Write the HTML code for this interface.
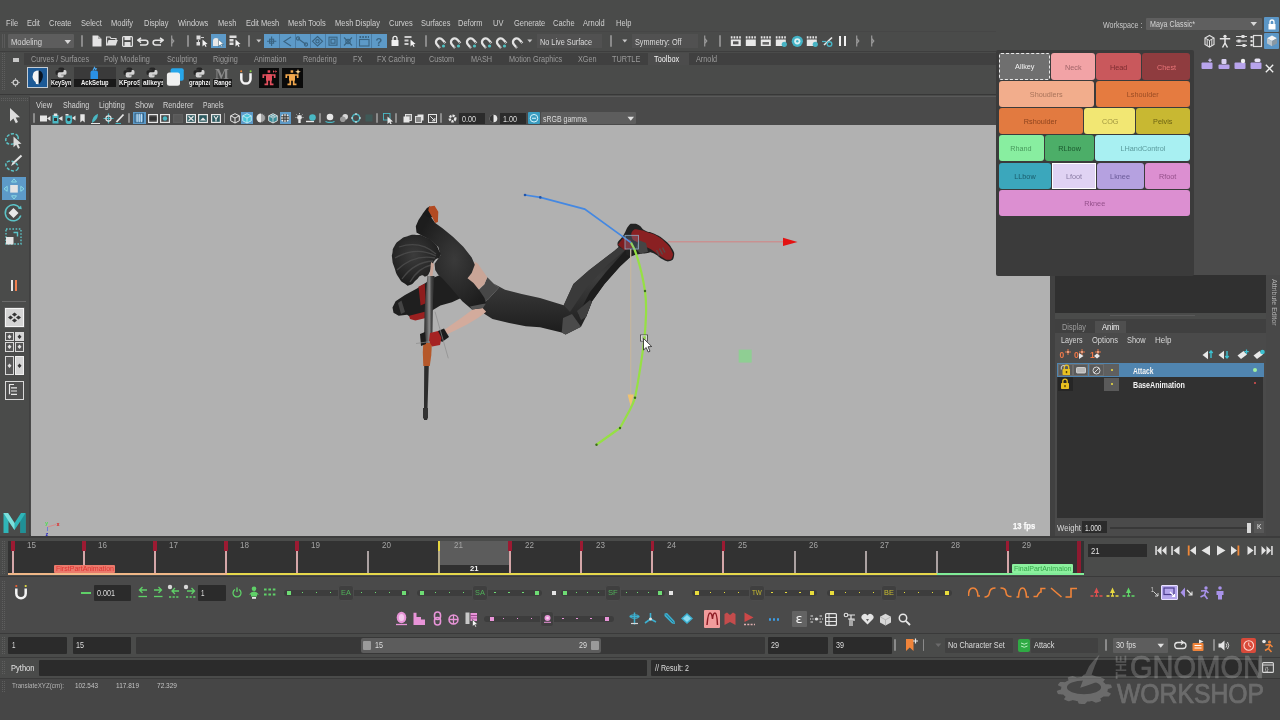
<!DOCTYPE html>
<html><head><meta charset="utf-8"><title>Maya</title>
<style>
html,body{margin:0;padding:0}
body{width:1280px;height:720px;overflow:hidden;background:#4a4b4a;position:relative;font-family:"Liberation Sans",sans-serif;}
body div,body svg{position:absolute;box-sizing:border-box}
.t{white-space:nowrap;transform-origin:0 50%}
.b{font-weight:bold}
</style></head><body><div id="root" style="left:0;top:0;width:1280px;height:720px;will-change:transform">
<div class="t" style="left:6px;top:16.6px;height:12px;line-height:12px;font-size:8.8px;color:#d0d0d0;transform:scaleX(0.850);">File</div>
<div class="t" style="left:27px;top:16.6px;height:12px;line-height:12px;font-size:8.8px;color:#d0d0d0;transform:scaleX(0.850);">Edit</div>
<div class="t" style="left:49px;top:16.6px;height:12px;line-height:12px;font-size:8.8px;color:#d0d0d0;transform:scaleX(0.850);">Create</div>
<div class="t" style="left:81px;top:16.6px;height:12px;line-height:12px;font-size:8.8px;color:#d0d0d0;transform:scaleX(0.850);">Select</div>
<div class="t" style="left:111px;top:16.6px;height:12px;line-height:12px;font-size:8.8px;color:#d0d0d0;transform:scaleX(0.850);">Modify</div>
<div class="t" style="left:144px;top:16.6px;height:12px;line-height:12px;font-size:8.8px;color:#d0d0d0;transform:scaleX(0.850);">Display</div>
<div class="t" style="left:177.5px;top:16.6px;height:12px;line-height:12px;font-size:8.8px;color:#d0d0d0;transform:scaleX(0.850);">Windows</div>
<div class="t" style="left:217.5px;top:16.6px;height:12px;line-height:12px;font-size:8.8px;color:#d0d0d0;transform:scaleX(0.850);">Mesh</div>
<div class="t" style="left:245.5px;top:16.6px;height:12px;line-height:12px;font-size:8.8px;color:#d0d0d0;transform:scaleX(0.850);">Edit Mesh</div>
<div class="t" style="left:288px;top:16.6px;height:12px;line-height:12px;font-size:8.8px;color:#d0d0d0;transform:scaleX(0.850);">Mesh Tools</div>
<div class="t" style="left:335px;top:16.6px;height:12px;line-height:12px;font-size:8.8px;color:#d0d0d0;transform:scaleX(0.850);">Mesh Display</div>
<div class="t" style="left:388.5px;top:16.6px;height:12px;line-height:12px;font-size:8.8px;color:#d0d0d0;transform:scaleX(0.850);">Curves</div>
<div class="t" style="left:420.5px;top:16.6px;height:12px;line-height:12px;font-size:8.8px;color:#d0d0d0;transform:scaleX(0.850);">Surfaces</div>
<div class="t" style="left:458px;top:16.6px;height:12px;line-height:12px;font-size:8.8px;color:#d0d0d0;transform:scaleX(0.850);">Deform</div>
<div class="t" style="left:493px;top:16.6px;height:12px;line-height:12px;font-size:8.8px;color:#d0d0d0;transform:scaleX(0.850);">UV</div>
<div class="t" style="left:513.5px;top:16.6px;height:12px;line-height:12px;font-size:8.8px;color:#d0d0d0;transform:scaleX(0.850);">Generate</div>
<div class="t" style="left:553px;top:16.6px;height:12px;line-height:12px;font-size:8.8px;color:#d0d0d0;transform:scaleX(0.850);">Cache</div>
<div class="t" style="left:583px;top:16.6px;height:12px;line-height:12px;font-size:8.8px;color:#d0d0d0;transform:scaleX(0.850);">Arnold</div>
<div class="t" style="left:615.5px;top:16.6px;height:12px;line-height:12px;font-size:8.8px;color:#d0d0d0;transform:scaleX(0.850);">Help</div>
<div class="t" style="left:1102.5px;top:18.6px;height:12px;line-height:12px;font-size:8.4px;color:#c8c8c8;transform:scaleX(0.850);">Workspace :</div>
<div style="left:1146px;top:17.8px;width:116px;height:12.2px;background:#5f5f5f;border-radius:1px"></div>
<div class="t" style="left:1150px;top:18.4px;height:12px;line-height:12px;font-size:8.4px;color:#d4d4d4;transform:scaleX(0.850);">Maya Classic*</div>
<svg style="left:1250px;top:21px;" width="8" height="6" viewBox="0 0 8 6"><path d="M0.5 1 L7 1 L3.75 5Z" fill="#d8d8d8"/></svg>
<div style="left:1263.5px;top:17px;width:15.5px;height:14.5px;background:#5b96c6;border-radius:1px"></div>
<svg style="left:1263.5px;top:17px;" width="16" height="15" viewBox="0 0 16 15"><rect x="4.5" y="7" width="7" height="5.5" fill="#fff"/><path d="M6 7 V5 a2 2 0 0 1 4 0 V7" fill="none" stroke="#fff" stroke-width="1.3"/></svg>
<div style="left:0px;top:30.8px;width:996px;height:0.8px;background:#464646;"></div>
<div style="left:2px;top:34px;width:1px;height:14px;background:#5a5a5a;"></div>
<div style="left:4px;top:34px;width:1px;height:14px;background:#5a5a5a;"></div>
<div style="left:8px;top:34px;width:66px;height:14px;background:#5d5d5d;border-radius:1px"></div>
<div class="t" style="left:10.5px;top:35.5px;height:12px;line-height:12px;font-size:9px;color:#d6d6d6;transform:scaleX(0.850);">Modeling</div>
<svg style="left:64px;top:38.5px;" width="8" height="6" viewBox="0 0 8 6"><path d="M0.5 1 L7 1 L3.75 5Z" fill="#d8d8d8"/></svg>
<div style="left:81px;top:35px;width:1.5px;height:12px;background:#8a8a8a;border-radius:1px"></div>
<div style="left:187px;top:35px;width:1.5px;height:12px;background:#8a8a8a;border-radius:1px"></div>
<div style="left:248px;top:35px;width:1.5px;height:12px;background:#8a8a8a;border-radius:1px"></div>
<div style="left:425px;top:35px;width:1.5px;height:12px;background:#8a8a8a;border-radius:1px"></div>
<div style="left:610px;top:35px;width:1.5px;height:12px;background:#8a8a8a;border-radius:1px"></div>
<div style="left:719px;top:35px;width:1.5px;height:12px;background:#8a8a8a;border-radius:1px"></div>
<svg style="left:171px;top:35px;" width="4" height="12" viewBox="0 0 4 12"><path d="M0.7 0.5 L0.7 11.5 M0.7 3.5 L2.8 6 L0.7 8.5" fill="none" stroke="#999" stroke-width="1.2"/></svg>
<svg style="left:704px;top:35px;" width="4" height="12" viewBox="0 0 4 12"><path d="M0.7 0.5 L0.7 11.5 M0.7 3.5 L2.8 6 L0.7 8.5" fill="none" stroke="#999" stroke-width="1.2"/></svg>
<svg style="left:855.5px;top:35px;" width="4" height="12" viewBox="0 0 4 12"><path d="M0.7 0.5 L0.7 11.5 M0.7 3.5 L2.8 6 L0.7 8.5" fill="none" stroke="#999" stroke-width="1.2"/></svg>
<svg style="left:870.5px;top:35px;" width="4" height="12" viewBox="0 0 4 12"><path d="M0.7 0.5 L0.7 11.5 M0.7 3.5 L2.8 6 L0.7 8.5" fill="none" stroke="#999" stroke-width="1.2"/></svg>
<svg style="left:92px;top:35px;" width="10" height="12" viewBox="0 0 10 12"><path d="M0.5 0.5 H6 L9.5 4 V11.5 H0.5Z" fill="#e4e4e4"/><path d="M6 0.5 V4 H9.5" fill="#aaa"/></svg>
<svg style="left:106px;top:36px;" width="12" height="10" viewBox="0 0 12 10"><path d="M0.5 9.5 V1 H4 L5 2.5 H10 V4" fill="none" stroke="#ddd" stroke-width="1.2"/><path d="M0.5 9.5 L2.5 4 H11.8 L9.8 9.5Z" fill="#e0e0e0"/></svg>
<svg style="left:122px;top:35.5px;" width="11" height="11" viewBox="0 0 11 11"><rect x="0.6" y="0.6" width="9.8" height="9.8" rx="1" fill="none" stroke="#e0e0e0" stroke-width="1.2"/><rect x="2.5" y="0.6" width="6" height="3.5" fill="#e0e0e0"/><rect x="2.5" y="6" width="6" height="4" fill="#e0e0e0"/></svg>
<svg style="left:137px;top:37px;" width="12" height="9" viewBox="0 0 12 9"><path d="M4 0.8 L0.8 3.2 L4 5.6 M1 3.2 H8.5 a2.3 2.3 0 0 1 0 4.8 H3" fill="none" stroke="#e4e4e4" stroke-width="1.5"/></svg>
<svg style="left:152px;top:37px;" width="12" height="9" viewBox="0 0 12 9"><path d="M8 0.8 L11.2 3.2 L8 5.6 M11 3.2 H3.5 a2.3 2.3 0 0 0 0 4.8 H9" fill="none" stroke="#e4e4e4" stroke-width="1.5"/></svg>
<svg style="left:196px;top:35px;" width="12" height="12" viewBox="0 0 12 12"><rect x="0.5" y="0.5" width="4" height="4" fill="#ddd"/><rect x="0.5" y="7" width="3.5" height="3.5" fill="#ddd"/><path d="M5 2.5 H8 M2.5 5 V7" stroke="#ccc" stroke-width="1"/><path d="M6.5 4.5 L6.5 11.5 L8.3 9.8 L9.6 12 L10.6 11.4 L9.4 9.3 L11.6 9.1Z" fill="#f2f2f2"/></svg>
<div style="left:211px;top:33.5px;width:14.5px;height:14.5px;background:#5d9ac8;"></div>
<svg style="left:212px;top:35px;" width="12" height="12" viewBox="0 0 12 12"><path d="M1 11 V6 a3 3 0 0 1 6 0 V11Z" fill="#e8e8e8"/><path d="M6.5 4.5 L6.5 11.5 L8.3 9.8 L9.6 12 L10.6 11.4 L9.4 9.3 L11.6 9.1Z" fill="#fff" stroke="#356" stroke-width="0.5"/></svg>
<svg style="left:229px;top:35px;" width="12" height="12" viewBox="0 0 12 12"><rect x="0.5" y="0.5" width="7" height="2.5" fill="#ddd"/><rect x="0.5" y="4" width="4" height="2.5" fill="#ddd"/><rect x="0.5" y="7.5" width="4" height="2.5" fill="#ddd"/><path d="M6.5 4.5 L6.5 11.5 L8.3 9.8 L9.6 12 L10.6 11.4 L9.4 9.3 L11.6 9.1Z" fill="#f2f2f2"/></svg>
<svg style="left:256px;top:39px;" width="6" height="4" viewBox="0 0 6 4"><path d="M0.3 0.5 L5.3 0.5 L2.8 3.5Z" fill="#c8c8c8"/></svg>
<div style="left:264.3px;top:33.5px;width:122.5px;height:14.5px;background:#5d9ac8;"></div>
<div style="left:279.20000000000005px;top:33.5px;width:0.8px;height:14.5px;background:#4a7da6;"></div>
<div style="left:294.50000000000006px;top:33.5px;width:0.8px;height:14.5px;background:#4a7da6;"></div>
<div style="left:309.80000000000007px;top:33.5px;width:0.8px;height:14.5px;background:#4a7da6;"></div>
<div style="left:325.1px;top:33.5px;width:0.8px;height:14.5px;background:#4a7da6;"></div>
<div style="left:340.40000000000003px;top:33.5px;width:0.8px;height:14.5px;background:#4a7da6;"></div>
<div style="left:355.70000000000005px;top:33.5px;width:0.8px;height:14.5px;background:#4a7da6;"></div>
<div style="left:371.00000000000006px;top:33.5px;width:0.8px;height:14.5px;background:#4a7da6;"></div>
<svg style="left:264.3px;top:33.5px;" width="123" height="15" viewBox="0 0 123 15"><g fill="none" stroke="#3a6482" stroke-width="1.1"><path d="M7.6 2.5 V12 M3 7.2 H12.3"/><rect x="5.6" y="5.2" width="4" height="4"/><path d="M27 3 L20 7.5 L27 12"/><path d="M34 4.5 L42 10.5"/><circle cx="34" cy="4.5" r="1.6"/><circle cx="42" cy="10.5" r="1.6"/><path d="M53.5 2.5 L58.5 7.3 L53.5 12 L48.5 7.3Z"/><circle cx="53.5" cy="7.3" r="1.7"/><rect x="65" y="3.2" width="8" height="8"/><rect x="67" y="5.2" width="4" height="4"/><path d="M80 3.5 L88 11.5 M88 3.5 L80 11.5"/><circle cx="84" cy="7.5" r="2.2"/><rect x="95.5" y="5.5" width="9.5" height="6.5"/><path d="M95.5 3 H105" stroke-width="2" stroke-dasharray="1.6 1.2"/></g><text x="111.5" y="11.8" font-size="11" font-weight="bold" fill="#3a6482" font-family="Liberation Sans,sans-serif">?</text></svg>
<svg style="left:391px;top:35px;" width="8" height="12" viewBox="0 0 8 12"><rect x="0.5" y="5" width="7" height="6" rx="0.6" fill="#f0f0f0"/><path d="M2 5 V3.3 a2 2 0 0 1 4 0 V5" fill="none" stroke="#f0f0f0" stroke-width="1.3"/></svg>
<svg style="left:404px;top:35px;" width="12" height="12" viewBox="0 0 12 12"><rect x="0.5" y="1" width="7" height="2" fill="#ccc"/><rect x="0.5" y="4.5" width="4" height="2" fill="#ccc"/><rect x="0.5" y="8" width="4" height="2" fill="#ccc"/><path d="M6.5 4.5 L6.5 11.5 L8.3 9.8 L9.6 12 L10.6 11.4 L9.4 9.3 L11.6 9.1Z" fill="#f2f2f2"/></svg>
<svg style="left:432.5px;top:34.5px;" width="15" height="14" viewBox="0 0 15 14"><g transform="rotate(-42 7 7.500) translate(0,0.500)"><path d="M3.300 11 V6.500 a3.700 3.700 0 0 1 7.400 0 V11" fill="none" stroke="#e2e2e2" stroke-width="2.300"/><path d="M2.200 10 H4.500 M9.500 10 H11.800" stroke="#666" stroke-width="0.800"/></g><circle cx="10.500" cy="11" r="1.600" fill="#4ec0c0"/></svg>
<svg style="left:448.3px;top:34.5px;" width="15" height="14" viewBox="0 0 15 14"><g transform="rotate(-42 7 7.500) translate(0,0.500)"><path d="M3.300 11 V6.500 a3.700 3.700 0 0 1 7.400 0 V11" fill="none" stroke="#e2e2e2" stroke-width="2.300"/><path d="M2.200 10 H4.500 M9.500 10 H11.800" stroke="#666" stroke-width="0.800"/></g><circle cx="10.500" cy="11" r="1.600" fill="#4ec0c0"/></svg>
<svg style="left:463.8px;top:34.5px;" width="15" height="14" viewBox="0 0 15 14"><g transform="rotate(-42 7 7.500) translate(0,0.500)"><path d="M3.300 11 V6.500 a3.700 3.700 0 0 1 7.400 0 V11" fill="none" stroke="#e2e2e2" stroke-width="2.300"/><path d="M2.200 10 H4.500 M9.500 10 H11.800" stroke="#666" stroke-width="0.800"/></g><circle cx="10.500" cy="11" r="1.600" fill="#4ec0c0"/></svg>
<svg style="left:478.8px;top:34.5px;" width="15" height="14" viewBox="0 0 15 14"><g transform="rotate(-42 7 7.500) translate(0,0.500)"><path d="M3.300 11 V6.500 a3.700 3.700 0 0 1 7.400 0 V11" fill="none" stroke="#e2e2e2" stroke-width="2.300"/><path d="M2.200 10 H4.500 M9.500 10 H11.800" stroke="#666" stroke-width="0.800"/></g><circle cx="10.500" cy="11" r="1.600" fill="#4ec0c0"/></svg>
<svg style="left:493.8px;top:34.5px;" width="15" height="14" viewBox="0 0 15 14"><g transform="rotate(-42 7 7.500) translate(0,0.500)"><path d="M3.300 11 V6.500 a3.700 3.700 0 0 1 7.400 0 V11" fill="none" stroke="#e2e2e2" stroke-width="2.300"/><path d="M2.200 10 H4.500 M9.500 10 H11.800" stroke="#666" stroke-width="0.800"/></g><circle cx="10.500" cy="11" r="1.600" fill="#4ec0c0"/></svg>
<svg style="left:509.5px;top:34.5px;" width="15" height="14" viewBox="0 0 15 14"><g transform="rotate(-42 7 7.500) translate(0,0.500)"><path d="M3.300 11 V6.500 a3.700 3.700 0 0 1 7.400 0 V11" fill="none" stroke="#e2e2e2" stroke-width="2.300"/><path d="M2.200 10 H4.500 M9.500 10 H11.800" stroke="#666" stroke-width="0.800"/></g></svg>
<svg style="left:527px;top:39px;" width="6" height="4" viewBox="0 0 6 4"><path d="M0.3 0.5 L5.3 0.5 L2.8 3.5Z" fill="#c8c8c8"/></svg>
<div style="left:537px;top:34px;width:64.5px;height:14px;background:#515151;"></div>
<div class="t" style="left:540px;top:35.5px;height:12px;line-height:12px;font-size:8.6px;color:#dcdcdc;transform:scaleX(0.850);">No Live Surface</div>
<svg style="left:622px;top:39px;" width="6" height="4" viewBox="0 0 6 4"><path d="M0.3 0.5 L5.3 0.5 L2.8 3.5Z" fill="#c8c8c8"/></svg>
<div style="left:632px;top:34px;width:65.5px;height:14px;background:#515151;"></div>
<div class="t" style="left:634.5px;top:35.5px;height:12px;line-height:12px;font-size:8.6px;color:#dcdcdc;transform:scaleX(0.850);">Symmetry: Off</div>
<svg style="left:730px;top:35px;" width="12" height="12" viewBox="0 0 12 12"><rect x="0.8" y="4.5" width="10" height="6.5" fill="#e8e8e8"/><path d="M0.8 2.4 H10.8" stroke="#e8e8e8" stroke-width="2.2" stroke-dasharray="1.7 1.1"/><rect x="3" y="6.3" width="5.5" height="3" fill="#555"/></svg>
<svg style="left:745px;top:35px;" width="12" height="12" viewBox="0 0 12 12"><rect x="0.8" y="4.5" width="10" height="6.5" fill="#e8e8e8"/><path d="M0.8 2.4 H10.8" stroke="#e8e8e8" stroke-width="2.2" stroke-dasharray="1.7 1.1"/></svg>
<svg style="left:760px;top:35px;" width="12" height="12" viewBox="0 0 12 12"><rect x="0.8" y="4.5" width="10" height="6.5" fill="#e8e8e8"/><path d="M0.8 2.4 H10.8" stroke="#e8e8e8" stroke-width="2.2" stroke-dasharray="1.7 1.1"/><rect x="2.5" y="7" width="6.5" height="2.6" fill="#666"/></svg>
<svg style="left:775px;top:35px;" width="12" height="12" viewBox="0 0 12 12"><rect x="0.8" y="4.5" width="10" height="6.5" fill="#e8e8e8"/><path d="M0.8 2.4 H10.8" stroke="#e8e8e8" stroke-width="2.2" stroke-dasharray="1.7 1.1"/><circle cx="9.3" cy="9.3" r="2.6" fill="#49b4c4"/></svg>
<svg style="left:791px;top:35px;" width="13" height="13" viewBox="0 0 13 13"><circle cx="6.3" cy="6.3" r="5.6" fill="#43b3c6"/><circle cx="6.3" cy="6.3" r="3.1" fill="#d8f0f4"/><circle cx="6.3" cy="6.3" r="1.2" fill="#43b3c6"/></svg>
<svg style="left:806px;top:35px;" width="12" height="12" viewBox="0 0 12 12"><rect x="0.8" y="4.5" width="10" height="6.5" fill="#e8e8e8"/><path d="M0.8 2.4 H10.8" stroke="#e8e8e8" stroke-width="2.2" stroke-dasharray="1.7 1.1"/><circle cx="9.3" cy="9.3" r="2.6" fill="#49b4c4"/></svg>
<svg style="left:821px;top:35px;" width="14" height="13" viewBox="0 0 14 13"><path d="M3 10 L11 2.5" stroke="#e8e8e8" stroke-width="1.6"/><circle cx="8.5" cy="9" r="2.3" fill="none" stroke="#49b4c4" stroke-width="1.4"/><path d="M1 6.5 H5" stroke="#49b4c4" stroke-width="1.2"/></svg>
<div style="left:839px;top:36.3px;width:2.2px;height:9.7px;background:#f0f0f0;"></div>
<div style="left:844.3px;top:36.3px;width:2.2px;height:9.7px;background:#f0f0f0;"></div>
<svg style="left:1203px;top:34px;" width="13" height="14" viewBox="0 0 13 14"><path d="M2 4 L6.5 1.5 L11 4 V10.5 L6.5 13 L2 10.5Z" fill="none" stroke="#ddd" stroke-width="1.2"/><path d="M2 4 L6.5 6.5 L11 4 M6.5 6.5 V13 M4.2 5.3 V11.7 M8.8 5.3 V11.7" stroke="#ddd" stroke-width="1" fill="none"/></svg>
<svg style="left:1219px;top:34px;" width="12" height="14" viewBox="0 0 12 14"><circle cx="6" cy="2.3" r="1.6" fill="#e6e6e6"/><path d="M0.8 4.8 H11.2 M6 4.8 V9 M6 9 L3.5 13.5 M6 9 L8.5 13.5" stroke="#e6e6e6" stroke-width="1.5" fill="none"/></svg>
<svg style="left:1235px;top:34px;" width="13" height="14" viewBox="0 0 13 14"><path d="M1 2.5 H12 M1 7 H12 M1 11.5 H12" stroke="#ddd" stroke-width="1.2"/><rect x="6.5" y="1" width="3" height="3" fill="#ddd"/><rect x="2.5" y="5.5" width="3" height="3" fill="#ddd"/><rect x="7.5" y="10" width="3" height="3" fill="#ddd"/></svg>
<svg style="left:1250px;top:34px;" width="13" height="14" viewBox="0 0 13 14"><rect x="3.5" y="1.5" width="8" height="11" fill="none" stroke="#ddd" stroke-width="1.2"/><rect x="0.5" y="2" width="2.2" height="2.2" fill="#ddd"/><rect x="0.5" y="6" width="2.2" height="2.2" fill="#ddd"/><rect x="0.5" y="10" width="2.2" height="2.2" fill="#ddd"/></svg>
<div style="left:1263.5px;top:33px;width:15.5px;height:16px;background:#5b96c6;border-radius:1px"></div>
<svg style="left:1264.5px;top:34px;" width="14" height="14" viewBox="0 0 14 14"><path d="M7 1.5 L12 4.2 L7 7 L2 4.2Z" fill="#f4f4f4"/><path d="M2 4.2 V9.5 L7 12.3 V7Z" fill="#b8c4cc"/><path d="M12 4.2 V9.5 L7 12.3 V7Z" fill="#8898a4"/></svg>
<div style="left:0px;top:51px;width:996px;height:1px;background:#3e3e3e;"></div>
<div style="left:24px;top:53px;width:972px;height:11.5px;background:#404040;"></div>
<div style="left:647.5px;top:53px;width:41px;height:12px;background:#4c4c4c;"></div>
<div class="t" style="left:31px;top:53.0px;height:12px;line-height:12px;font-size:8.6px;color:#9a9a9a;transform:scaleX(0.850);">Curves / Surfaces</div>
<div class="t" style="left:104px;top:53.0px;height:12px;line-height:12px;font-size:8.6px;color:#9a9a9a;transform:scaleX(0.850);">Poly Modeling</div>
<div class="t" style="left:167px;top:53.0px;height:12px;line-height:12px;font-size:8.6px;color:#9a9a9a;transform:scaleX(0.850);">Sculpting</div>
<div class="t" style="left:213px;top:53.0px;height:12px;line-height:12px;font-size:8.6px;color:#9a9a9a;transform:scaleX(0.850);">Rigging</div>
<div class="t" style="left:254px;top:53.0px;height:12px;line-height:12px;font-size:8.6px;color:#9a9a9a;transform:scaleX(0.850);">Animation</div>
<div class="t" style="left:303px;top:53.0px;height:12px;line-height:12px;font-size:8.6px;color:#9a9a9a;transform:scaleX(0.850);">Rendering</div>
<div class="t" style="left:353px;top:53.0px;height:12px;line-height:12px;font-size:8.6px;color:#9a9a9a;transform:scaleX(0.850);">FX</div>
<div class="t" style="left:377px;top:53.0px;height:12px;line-height:12px;font-size:8.6px;color:#9a9a9a;transform:scaleX(0.850);">FX Caching</div>
<div class="t" style="left:429px;top:53.0px;height:12px;line-height:12px;font-size:8.6px;color:#9a9a9a;transform:scaleX(0.850);">Custom</div>
<div class="t" style="left:471px;top:53.0px;height:12px;line-height:12px;font-size:8.6px;color:#9a9a9a;transform:scaleX(0.850);">MASH</div>
<div class="t" style="left:509px;top:53.0px;height:12px;line-height:12px;font-size:8.6px;color:#9a9a9a;transform:scaleX(0.850);">Motion Graphics</div>
<div class="t" style="left:578px;top:53.0px;height:12px;line-height:12px;font-size:8.6px;color:#9a9a9a;transform:scaleX(0.850);">XGen</div>
<div class="t" style="left:612px;top:53.0px;height:12px;line-height:12px;font-size:8.6px;color:#9a9a9a;transform:scaleX(0.850);">TURTLE</div>
<div class="t" style="left:654px;top:53.0px;height:12px;line-height:12px;font-size:8.6px;color:#f4f4f4;transform:scaleX(0.850);">Toolbox</div>
<div class="t" style="left:696px;top:53.0px;height:12px;line-height:12px;font-size:8.6px;color:#9a9a9a;transform:scaleX(0.850);">Arnold</div>
<div style="left:12.5px;top:58px;width:6px;height:4px;background:#c8c8c8;"></div>
<svg style="left:11px;top:78px;" width="9" height="9" viewBox="0 0 9 9"><circle cx="4.5" cy="4.5" r="2.4" fill="none" stroke="#ccc" stroke-width="1.3"/><path d="M4.5 0.3 V1.6 M4.5 7.4 V8.7 M0.3 4.5 H1.6 M7.4 4.5 H8.7" stroke="#ccc" stroke-width="1"/></svg>
<div style="left:2px;top:53px;width:1px;height:38px;background:repeating-linear-gradient(#5e5e5e 0 1px,transparent 1px 2px)"></div>
<div style="left:4px;top:53px;width:1px;height:38px;background:repeating-linear-gradient(#5e5e5e 0 1px,transparent 1px 2px)"></div>
<div style="left:26.9px;top:66.7px;width:21.2px;height:21px;background:#1d5a96;border:1px solid #c4ccd4"></div>
<svg style="left:27px;top:67px;" width="21" height="21" viewBox="0 0 21 21"><path d="M9.250 3.700 Q6.300 4.500 6.100 6.800 L5.500 10 L6.100 11.900 Q7 14 8.600 15 L9 16.900 L11.750 17.200 V3.600Z" fill="#f4f4f4"/><path d="M11.750 3.600 Q14.900 4.200 15.800 7.500 Q16.300 10.500 14.900 13.100 Q13.900 15.500 11.750 17.200Z" fill="#0a1420"/></svg>
<svg style="left:54.8px;top:66.6px;" width="12" height="11" viewBox="0 0 12 11"><path d="M5.200 0.500 H7.500 Q9.300 0.500 9.300 2.300 V4.300 Q9.300 5.800 7.800 5.800 H4.800 Q3.300 5.800 3.300 7.300 V8 H2 Q0.500 8 0.500 6.200 V4.700 Q0.500 3.200 2.200 3.200 H5.800 V2.700 H3.300 V2 Q3.300 0.500 5.200 0.500Z" fill="#262626"/><path d="M6.800 10.500 H4.500 Q2.700 10.500 2.700 8.700 V6.700 Q2.700 5.200 4.200 5.200 H7.200 Q8.700 5.200 8.700 3.700 V3 H10 Q11.500 3 11.500 4.800 V6.300 Q11.500 7.800 9.800 7.800 H6.200 V8.300 H8.700 V9 Q8.700 10.500 6.800 10.500Z" fill="#d4d4d4"/></svg>
<div style="left:50.6px;top:78.9px;width:20.9px;height:8.2px;background:#191919;"></div>
<div class="t b" style="left:50.9px;top:79.2px;height:8px;line-height:8px;font-size:6.8px;color:#f2f2f2;transform:scaleX(0.814);max-width:25.3px;overflow:hidden">KeySyn</div>
<div style="left:73.75px;top:66.5px;width:41.85px;height:12.4px;background:#3a3a3a;"></div>
<svg style="left:88px;top:65.5px;" width="12" height="14" viewBox="0 0 12 14"><path d="M2.500 13 V6.500 Q2.500 4.500 4.500 4.500 H8 Q10 4.500 10 6.500 V13Z" fill="#2a90e4"/><path d="M5 4.500 L6.500 1.500 L7.500 3.500 L9 2.500" fill="none" stroke="#4aa8f0" stroke-width="1.100"/></svg>
<div style="left:73.75px;top:78.9px;width:41.849999999999994px;height:8.2px;background:#191919;"></div>
<div class="t b" style="left:81.25px;top:79.2px;height:8px;line-height:8px;font-size:6.8px;color:#f2f2f2;transform:scaleX(0.885);max-width:38.8px;overflow:hidden">AckSetup</div>
<svg style="left:122.5px;top:66.6px;" width="12" height="11" viewBox="0 0 12 11"><path d="M5.200 0.500 H7.500 Q9.300 0.500 9.300 2.300 V4.300 Q9.300 5.800 7.800 5.800 H4.800 Q3.300 5.800 3.300 7.300 V8 H2 Q0.500 8 0.500 6.200 V4.700 Q0.500 3.200 2.200 3.200 H5.800 V2.700 H3.300 V2 Q3.300 0.500 5.200 0.500Z" fill="#262626"/><path d="M6.800 10.500 H4.500 Q2.700 10.500 2.700 8.700 V6.700 Q2.700 5.200 4.200 5.200 H7.200 Q8.700 5.200 8.700 3.700 V3 H10 Q11.500 3 11.500 4.800 V6.300 Q11.500 7.800 9.800 7.800 H6.200 V8.300 H8.700 V9 Q8.700 10.500 6.800 10.500Z" fill="#d4d4d4"/></svg>
<div style="left:118.75px;top:78.9px;width:20.650000000000006px;height:8.2px;background:#191919;"></div>
<div class="t b" style="left:119.05px;top:79.2px;height:8px;line-height:8px;font-size:6.8px;color:#f2f2f2;transform:scaleX(0.896);max-width:22.7px;overflow:hidden">KFproS</div>
<svg style="left:145.6px;top:66.6px;" width="12" height="11" viewBox="0 0 12 11"><path d="M5.200 0.500 H7.500 Q9.300 0.500 9.300 2.300 V4.300 Q9.300 5.800 7.800 5.800 H4.800 Q3.300 5.800 3.300 7.300 V8 H2 Q0.500 8 0.500 6.200 V4.700 Q0.500 3.200 2.200 3.200 H5.800 V2.700 H3.300 V2 Q3.300 0.500 5.200 0.500Z" fill="#262626"/><path d="M6.800 10.500 H4.500 Q2.700 10.500 2.700 8.700 V6.700 Q2.700 5.200 4.200 5.200 H7.200 Q8.700 5.200 8.700 3.700 V3 H10 Q11.500 3 11.500 4.800 V6.300 Q11.500 7.800 9.800 7.800 H6.200 V8.300 H8.700 V9 Q8.700 10.500 6.800 10.500Z" fill="#d4d4d4"/></svg>
<div style="left:142.25px;top:78.9px;width:20.25px;height:8.2px;background:#191919;"></div>
<div class="t b" style="left:142.55px;top:79.2px;height:8px;line-height:8px;font-size:6.8px;color:#f2f2f2;transform:scaleX(0.948);max-width:21.1px;overflow:hidden">allkeys</div>
<svg style="left:165px;top:67px;" width="20" height="20" viewBox="0 0 20 20"><rect x="5.600" y="1.250" width="13.150" height="12.500" rx="2" fill="#27a6ea"/><rect x="1.900" y="5.600" width="13.100" height="13.150" rx="2.500" fill="#f0f0f0"/></svg>
<svg style="left:192.5px;top:66.6px;" width="12" height="11" viewBox="0 0 12 11"><path d="M5.200 0.500 H7.500 Q9.300 0.500 9.300 2.300 V4.300 Q9.300 5.800 7.800 5.800 H4.800 Q3.300 5.800 3.300 7.300 V8 H2 Q0.500 8 0.500 6.200 V4.700 Q0.500 3.200 2.200 3.200 H5.800 V2.700 H3.300 V2 Q3.300 0.500 5.200 0.500Z" fill="#262626"/><path d="M6.800 10.500 H4.500 Q2.700 10.500 2.700 8.700 V6.700 Q2.700 5.200 4.200 5.200 H7.200 Q8.700 5.200 8.700 3.700 V3 H10 Q11.500 3 11.500 4.800 V6.300 Q11.500 7.800 9.800 7.800 H6.200 V8.300 H8.700 V9 Q8.700 10.500 6.800 10.500Z" fill="#d4d4d4"/></svg>
<div style="left:188.5px;top:78.9px;width:21.5px;height:8.2px;background:#191919;"></div>
<div class="t b" style="left:188.8px;top:79.2px;height:8px;line-height:8px;font-size:6.8px;color:#f2f2f2;transform:scaleX(0.870);max-width:24.4px;overflow:hidden">graphzo</div>
<div class="t b" style="left:215.200px;top:65.500px;height:15px;line-height:15px;font-size:15.500px;color:#8a8a8a;font-family:'Liberation Serif',serif;transform:scaleX(0.950)">M</div>
<div style="left:212.5px;top:78.9px;width:19.75px;height:8.2px;background:#191919;"></div>
<div class="t b" style="left:213.8px;top:79.2px;height:8px;line-height:8px;font-size:6.8px;color:#f2f2f2;transform:scaleX(0.842);max-width:21.9px;overflow:hidden">Range</div>
<svg style="left:238px;top:69px;" width="16" height="17" viewBox="0 0 16 17"><path d="M2.300 4.300 V10 a4.600 4.600 0 0 0 9.200 0 V4.300" fill="none" stroke="#f4f4f4" stroke-width="2.500" transform="translate(1,0)"/><circle cx="3.200" cy="2.200" r="1" fill="#e88030"/><circle cx="12.600" cy="2.200" r="1" fill="#80d040"/></svg>
<div style="left:258.75px;top:67.6px;width:20.6px;height:20px;background:#0a0a0a;"></div>
<svg style="left:258.75px;top:67.6px;" width="20.6" height="20" viewBox="0 0 20.6 20"><g fill="none" stroke="#e4505e" stroke-width="1.700"><rect x="8.600" y="2.300" width="2.600" height="2.400" fill="#e4505e" stroke="none"/><path d="M4.300 10 V7 H15.700 V10"/><path d="M8 7 V12.500 M12 7 V12.500" stroke-width="2"/><path d="M8.300 12 V16.300 H5.500 M11.700 12 V16.300 H14.500"/></g><rect x="7.600" y="6.200" width="4.800" height="6.500" fill="#e4505e"/><path d="M14 2.200 L15.800 3.500 L14 4.800Z M16.300 2.200 L18.100 3.500 L16.300 4.800Z" fill="#e4505e"/></svg>
<div style="left:282.25px;top:67.6px;width:20.6px;height:20px;background:#0a0a0a;"></div>
<svg style="left:282.25px;top:67.6px;" width="20.6" height="20" viewBox="0 0 20.6 20"><g fill="none" stroke="#f2a84e" stroke-width="1.700"><rect x="8.600" y="2.300" width="2.600" height="2.400" fill="#f2a84e" stroke="none"/><path d="M4.300 10 V7 H15.700 V10"/><path d="M8 7 V12.500 M12 7 V12.500" stroke-width="2"/><path d="M8.300 12 V16.300 H5.500 M11.700 12 V16.300 H14.500"/></g><rect x="7.600" y="6.200" width="4.800" height="6.500" fill="#f2a84e"/><path d="M16 1 L16.800 3 L18.800 3.800 L16.800 4.600 L16 6.600 L15.200 4.600 L13.200 3.800 L15.200 3Z" fill="#f8d090"/></svg>
<div style="left:0px;top:93.8px;width:996px;height:1.6px;background:#383838;"></div>
<div style="left:1px;top:97.5px;width:27px;height:1px;background:repeating-linear-gradient(90deg,#5e5e5e 0 1px,transparent 1px 2px)"></div>
<div style="left:1px;top:99.5px;width:27px;height:1px;background:repeating-linear-gradient(90deg,#5e5e5e 0 1px,transparent 1px 2px)"></div>
<svg style="left:9.5px;top:108px;" width="12" height="16" viewBox="0 0 12 16"><path d="M0 0 L0 13.5 L3.4 10.4 L5.8 15.2 L8 14.1 L5.7 9.5 L10 9.2Z" fill="#dcdcdc"/></svg>
<svg style="left:3px;top:130px;" width="22" height="22" viewBox="0 0 22 22"><ellipse cx="9" cy="9" rx="6.5" ry="5" fill="none" stroke="#5cc4c8" stroke-width="1.5" stroke-dasharray="3 1.6" transform="rotate(-25 9 9)"/><g transform="translate(10.5,6.5) scale(0.8)"><path d="M0 0 L0 13.5 L3.4 10.4 L5.8 15.2 L8 14.1 L5.7 9.5 L10 9.2Z" fill="#dcdcdc"/></g></svg>
<svg style="left:3px;top:154px;" width="22" height="22" viewBox="0 0 22 22"><ellipse cx="9" cy="12" rx="6.5" ry="4.5" fill="none" stroke="#5cc4c8" stroke-width="1.5" stroke-dasharray="3 1.6" transform="rotate(25 9 12)"/><path d="M8 12 L12 9.5 L10 7.5Z" fill="#e4e4e4"/><path d="M11 8.5 L18.5 1.5" stroke="#e4e4e4" stroke-width="2"/></svg>
<div style="left:2.2px;top:176.7px;width:24.2px;height:23.8px;background:#5d9ac8;"></div>
<svg style="left:2.2px;top:176.7px;" width="24" height="24" viewBox="0 0 24 24"><rect x="8.200" y="8" width="7.600" height="7.600" fill="#e4e4e4"/><path d="M12 1.800 L14.500 5 H9.500Z M12 22 L14.500 18.800 H9.500Z M2 11.800 L5.200 9.300 V14.300Z M22 11.800 L18.800 9.300 V14.300Z" fill="none" stroke="#8fe0e8" stroke-width="0.9"/></svg>
<svg style="left:3px;top:202px;" width="22" height="22" viewBox="0 0 22 22"><path d="M10.500 6 L15.500 11 L10.500 16 L5.500 11Z" fill="#e8e8e8"/><path d="M17.800 13.500 A8 8 0 1 1 17 6.500" fill="none" stroke="#5cc4c8" stroke-width="1.500"/><path d="M15 6.800 L18.800 7.200 L18 3.500Z" fill="#5cc4c8"/></svg>
<svg style="left:4px;top:227px;" width="20" height="20" viewBox="0 0 20 20"><rect x="2" y="2" width="15" height="15" fill="none" stroke="#5cc4c8" stroke-width="1.400" stroke-dasharray="1.600 1.600"/><rect x="2" y="10" width="7.500" height="7.500" fill="#e4e4e4"/><path d="M9.500 5.500 H13.500 V9.500" fill="none" stroke="#5cc4c8" stroke-width="1.400"/></svg>
<div style="left:10.5px;top:280px;width:2.2px;height:11px;background:#e8e8e8;"></div>
<div style="left:15px;top:280px;width:2.2px;height:11px;background:#f08050;"></div>
<div style="left:2px;top:301px;width:24px;height:1px;background:#6a6a6a;"></div>
<div style="left:4.5px;top:308px;width:19px;height:18.5px;background:#d4d4d4;border:1px solid #f4f4f4;box-shadow:0 0 0 0.5px #777"></div>
<svg style="left:4.5px;top:308px;" width="19" height="18.5" viewBox="0 0 19 18.5"><path d="M9.500 4.500 L12 6.500 L9.500 8.500 L7 6.500Z M5.500 7.500 L8 9.500 L5.500 11.500 L3 9.500Z M13.500 7.500 L16 9.500 L13.500 11.500 L11 9.500Z M9.500 10.500 L12 12.500 L9.500 14.500 L7 12.500Z" fill="#333"/></svg>
<div style="left:4.5px;top:331.7px;width:9px;height:9.5px;background:#555;border:1px solid #d8d8d8"></div>
<svg style="left:4.5px;top:331.7px;" width="9" height="9.5" viewBox="0 0 9 9.5"><path d="M4.500 2.500 L6.500 4.700 L4.500 7 L2.500 4.700Z" fill="#e0e0e0"/></svg>
<div style="left:14.5px;top:331.7px;width:9px;height:9.5px;background:#d4d4d4;border:1px solid #d8d8d8"></div>
<svg style="left:14.5px;top:331.7px;" width="9" height="9.5" viewBox="0 0 9 9.5"><path d="M4.500 2.500 L6.500 4.700 L4.500 7 L2.500 4.700Z" fill="#333"/></svg>
<div style="left:4.5px;top:342px;width:9px;height:9.5px;background:#555;border:1px solid #d8d8d8"></div>
<svg style="left:4.5px;top:342px;" width="9" height="9.5" viewBox="0 0 9 9.5"><path d="M4.500 2.500 L6.500 4.700 L4.500 7 L2.500 4.700Z" fill="#e0e0e0"/></svg>
<div style="left:14.5px;top:342px;width:9px;height:9.5px;background:#555;border:1px solid #d8d8d8"></div>
<svg style="left:14.5px;top:342px;" width="9" height="9.5" viewBox="0 0 9 9.5"><path d="M4.500 2.500 L6.500 4.700 L4.500 7 L2.500 4.700Z" fill="#e0e0e0"/></svg>
<div style="left:4.5px;top:356px;width:9px;height:19.4px;background:#555;border:1px solid #d8d8d8"></div>
<div style="left:14.5px;top:356px;width:9px;height:19.4px;background:#d4d4d4;border:1px solid #f0f0f0"></div>
<svg style="left:4.5px;top:356px;" width="9" height="19.4" viewBox="0 0 9 19.4"><path d="M4.500 7.500 L6.500 9.700 L4.500 12 L2.500 9.700Z" fill="#e0e0e0"/></svg>
<svg style="left:14.5px;top:356px;" width="9" height="19.4" viewBox="0 0 9 19.4"><path d="M4.500 7.500 L6.500 9.700 L4.500 12 L2.500 9.700Z" fill="#333"/></svg>
<div style="left:4.5px;top:381px;width:19px;height:18.7px;background:#505050;border:1px solid #d8d8d8"></div>
<svg style="left:4.5px;top:381px;" width="19" height="18.7" viewBox="0 0 19 18.7"><path d="M4 3.500 H9 M6 6.800 H12 M6 10 H12 M6 13.300 H12 M4.500 3.500 V13.300" stroke="#e8e8e8" stroke-width="1.200" fill="none"/></svg>
<svg style="left:2.5px;top:511.5px;" width="23" height="22" viewBox="0 0 23 22"><path d="M0.500 1 L5 1 L11.500 11 L18 1 L22.500 1 L22.500 21 L17.500 21 L17.500 9 L11.500 18 L5.500 9 L5.500 21 L0.500 21Z" fill="#2fb5b8"/><path d="M0.500 1 L5 1 L11.500 11 L11.500 18 L5.500 9Z" fill="#7ee0dc"/><path d="M17.500 9 L22.500 1 V21 H17.500Z" fill="#1f9096"/></svg>
<div style="left:29.3px;top:96.2px;width:1022.5px;height:440.2px;background:#4a4a4a;border:1px solid #404040;border-top-color:#5a5a5a"></div>
<div class="t" style="left:36.2px;top:99.0px;height:12px;line-height:12px;font-size:8.8px;color:#d4d4d4;transform:scaleX(0.862);">View</div>
<div class="t" style="left:62.5px;top:99.0px;height:12px;line-height:12px;font-size:8.8px;color:#d4d4d4;transform:scaleX(0.814);">Shading</div>
<div class="t" style="left:98.7px;top:99.0px;height:12px;line-height:12px;font-size:8.8px;color:#d4d4d4;transform:scaleX(0.837);">Lighting</div>
<div class="t" style="left:134.5px;top:99.0px;height:12px;line-height:12px;font-size:8.8px;color:#d4d4d4;transform:scaleX(0.840);">Show</div>
<div class="t" style="left:162.5px;top:99.0px;height:12px;line-height:12px;font-size:8.8px;color:#d4d4d4;transform:scaleX(0.831);">Renderer</div>
<div class="t" style="left:202.5px;top:99.0px;height:12px;line-height:12px;font-size:8.8px;color:#d4d4d4;transform:scaleX(0.762);">Panels</div>
<div style="left:33.0px;top:113px;width:1.5px;height:10px;background:#8c8c8c;border-radius:1px"></div>
<div style="left:127.99999999999999px;top:113px;width:1.5px;height:10px;background:#8c8c8c;border-radius:1px"></div>
<div style="left:223.8px;top:113px;width:1.5px;height:10px;background:#8c8c8c;border-radius:1px"></div>
<div style="left:319.3px;top:113px;width:1.5px;height:10px;background:#8c8c8c;border-radius:1px"></div>
<div style="left:376.3px;top:113px;width:1.5px;height:10px;background:#8c8c8c;border-radius:1px"></div>
<div style="left:395.3px;top:113px;width:1.5px;height:10px;background:#8c8c8c;border-radius:1px"></div>
<div style="left:440.3px;top:113px;width:1.5px;height:10px;background:#8c8c8c;border-radius:1px"></div>
<svg style="left:39.5px;top:113.5px;" width="11" height="9" viewBox="0 0 11 9"><rect x="0" y="1.500" width="7" height="6" fill="#e6e6e6"/><path d="M7 4.500 L10.500 2 V7Z" fill="#e6e6e6"/></svg>
<svg style="left:52px;top:112.5px;" width="11" height="11" viewBox="0 0 11 11"><rect x="0.500" y="2" width="6" height="8.500" fill="#49b8c4"/><rect x="1.800" y="0.500" width="3.500" height="2.500" fill="#e6e6e6"/><path d="M6.500 5.500 L10.500 3 V8Z" fill="#e6e6e6"/><rect x="2" y="5" width="3" height="3" fill="#333"/></svg>
<svg style="left:64.5px;top:112.5px;" width="11" height="11" viewBox="0 0 11 11"><path d="M0.500 2.500 H7 V8 A3.200 3.200 0 0 1 0.500 8Z" fill="#49b8c4"/><circle cx="3.700" cy="6.500" r="1.700" fill="#333"/><path d="M7 5 L10.500 2.500 V7.500Z" fill="#e6e6e6"/><rect x="0.500" y="1" width="3" height="1.500" fill="#e6e6e6"/></svg>
<svg style="left:80px;top:113.5px;" width="5" height="9" viewBox="0 0 5 9"><path d="M0.300 0.300 H4.700 V8.500 L2.500 6.500 L0.300 8.500Z" fill="#e6e6e6"/></svg>
<svg style="left:89.5px;top:112.5px;" width="11" height="11" viewBox="0 0 11 11"><path d="M2 10 Q2 3 8 0.800 Q8 7 2 10Z" fill="#49b8c4"/><path d="M1 10.500 H10" stroke="#e6e6e6" stroke-width="1"/></svg>
<svg style="left:102.5px;top:112.5px;" width="11" height="11" viewBox="0 0 11 11"><path d="M5.500 0.500 V10.500 M0.500 5.500 H10.500" stroke="#49b8c4" stroke-width="1.200"/><circle cx="5.500" cy="5.500" r="2.600" fill="none" stroke="#e6e6e6" stroke-width="1.100"/></svg>
<svg style="left:115px;top:112.5px;" width="10" height="11" viewBox="0 0 10 11"><path d="M1.500 9 L8.500 1.500" stroke="#e6e6e6" stroke-width="1.800"/><path d="M0.500 10.500 H6" stroke="#49b8c4" stroke-width="1.100"/></svg>
<div style="left:133px;top:112px;width:12.5px;height:12px;background:#5d9ac8;"></div>
<svg style="left:133px;top:112px;" width="12.5" height="12" viewBox="0 0 12.5 12"><rect x="2" y="1.800" width="8.500" height="8.400" fill="none" stroke="#2f5878" stroke-width="0.900"/><path d="M4.100 1.800 V10.200 M6.250 1.800 V10.200 M8.400 1.800 V10.200" stroke="#d8e8f4" stroke-width="0.900"/></svg>
<svg style="left:147.5px;top:113.5px;" width="10" height="9" viewBox="0 0 10 9"><rect x="0.600" y="0.600" width="8.800" height="7.800" fill="none" stroke="#e6e6e6" stroke-width="1.200"/><rect x="1.500" y="2.800" width="7" height="3.400" fill="#333"/></svg>
<svg style="left:160px;top:113.5px;" width="10" height="9" viewBox="0 0 10 9"><rect x="0.600" y="0.600" width="8.800" height="7.800" fill="none" stroke="#e6e6e6" stroke-width="1.200"/><circle cx="5" cy="4.500" r="2.200" fill="#49b8c4"/></svg>
<svg style="left:173px;top:113.5px;" width="10" height="9" viewBox="0 0 10 9"><rect x="0.600" y="0.600" width="8.800" height="7.800" fill="#585858" stroke="#5e5e5e" stroke-width="1.200"/></svg>
<svg style="left:185.5px;top:113.5px;" width="10" height="9" viewBox="0 0 10 9"><rect x="0.600" y="0.600" width="8.800" height="7.800" fill="#2c5a60" stroke="#e6e6e6" stroke-width="1.200"/><path d="M2.500 2.300 L7.500 6.700 M7.500 2.300 L2.500 6.700" stroke="#e6e6e6" stroke-width="1.300"/></svg>
<svg style="left:198px;top:113.5px;" width="10" height="9" viewBox="0 0 10 9"><rect x="0.600" y="0.600" width="8.800" height="7.800" fill="#2c5a60" stroke="#e6e6e6" stroke-width="1.200"/><path d="M2 6.500 L5 3.500 L8 6.500Z" fill="#e6e6e6"/></svg>
<svg style="left:210.5px;top:113.5px;" width="10" height="9" viewBox="0 0 10 9"><rect x="0.600" y="0.600" width="8.800" height="7.800" fill="#2c5a60" stroke="#e6e6e6" stroke-width="1.200"/><path d="M3 2 L5 5 L7 2 M5 5 V7.500" stroke="#e6e6e6" stroke-width="1.200" fill="none"/></svg>
<svg style="left:230px;top:112.5px;" width="10" height="11" viewBox="0 0 10 11"><path d="M5 0.700 L9.300 2.800 V7.800 L5 10 L0.700 7.800 V2.800Z" fill="none" stroke="#e6e6e6" stroke-width="1"/><path d="M0.700 2.800 L5 5 L9.300 2.800 M5 5 V10" fill="none" stroke="#e6e6e6" stroke-width="1"/></svg>
<div style="left:241px;top:112px;width:12px;height:12px;background:#5d9ac8;"></div>
<svg style="left:242px;top:112.5px;" width="10" height="11" viewBox="0 0 10 11"><path d="M5 0.700 L9.300 2.800 V7.800 L5 10 L0.700 7.800 V2.800Z" fill="#49c4d8" stroke="#d0f0f8" stroke-width="0.800"/><path d="M0.700 2.800 L5 5 L9.300 2.800 M5 5 V10" fill="none" stroke="#d0f0f8" stroke-width="0.800"/></svg>
<svg style="left:255.5px;top:113px;" width="10" height="10" viewBox="0 0 10 10"><circle cx="5" cy="5" r="4.500" fill="#e6e6e6"/><path d="M5 0.500 A4.500 4.500 0 0 1 5 9.500 M5 2 H8 M5 4 H9 M5 6 H9 M5 8 H8" stroke="#444" stroke-width="0.800" fill="none"/></svg>
<svg style="left:267.5px;top:112.5px;" width="10" height="11" viewBox="0 0 10 11"><path d="M5 0.700 L9.300 2.800 V7.800 L5 10 L0.700 7.800 V2.800Z" fill="#3a8c98" stroke="#e6e6e6" stroke-width="0.900"/><path d="M0.700 2.800 L5 5 L9.300 2.800 M5 5 V10 M2.800 1.700 L7.200 4 M7.200 1.700 L2.800 4" fill="none" stroke="#e6e6e6" stroke-width="0.700"/></svg>
<div style="left:279.5px;top:112px;width:11.8px;height:12px;background:#5d9ac8;"></div>
<svg style="left:280.4px;top:113px;" width="10" height="10" viewBox="0 0 10 10"><circle cx="5" cy="5" r="4.300" fill="#e8e8e8"/><path d="M1 3.500 H9 M0.700 5 H9.300 M1 6.500 H9 M3.500 1 V9 M5 0.700 V9.300 M6.500 1 V9" stroke="#333" stroke-width="0.700"/></svg>
<svg style="left:294.5px;top:112.5px;" width="9" height="11" viewBox="0 0 9 11"><circle cx="4.500" cy="4.500" r="2.400" fill="#e6e6e6"/><rect x="3.300" y="6.500" width="2.400" height="3.500" fill="#e6e6e6"/><path d="M4.500 0 V1.200 M0.500 4.500 H1.500 M7.500 4.500 H8.500 M1.500 1.500 L2.300 2.300 M7.500 1.500 L6.700 2.300" stroke="#e6e6e6" stroke-width="0.800"/></svg>
<svg style="left:306px;top:113px;" width="11" height="10" viewBox="0 0 11 10"><path d="M0 8.500 H8" stroke="#e6e6e6" stroke-width="1.400"/><circle cx="6.500" cy="4.500" r="3.300" fill="#49b8c4"/></svg>
<svg style="left:325px;top:113px;" width="10" height="10" viewBox="0 0 10 10"><circle cx="5" cy="4" r="3.300" fill="#e6e6e6"/><path d="M0.500 8.500 Q5 10.500 9.500 8.500" stroke="#49b8c4" stroke-width="1.300" fill="none"/></svg>
<svg style="left:339px;top:113px;" width="10" height="10" viewBox="0 0 10 10"><circle cx="6.200" cy="3.800" r="2.800" fill="#d8d8d8"/><circle cx="3.800" cy="6.200" r="2.800" fill="#9a9a9a"/></svg>
<svg style="left:351px;top:113px;" width="10" height="10" viewBox="0 0 10 10"><circle cx="5" cy="5" r="3.700" fill="none" stroke="#49b8c4" stroke-width="1.500"/><path d="M5 0 V2 M5 8 V10 M0 5 H2 M8 5 H10" stroke="#e6e6e6" stroke-width="1.100"/></svg>
<svg style="left:365px;top:114px;" width="8" height="8" viewBox="0 0 8 8"><rect x="0.500" y="0.500" width="7" height="7" fill="#3f5a58"/></svg>
<svg style="left:382.5px;top:112.5px;" width="11" height="11" viewBox="0 0 11 11"><rect x="0.500" y="0.500" width="6.500" height="6.500" fill="none" stroke="#49b8c4" stroke-width="0.900"/><g transform="translate(4.500,3.500) scale(0.550)"><path d="M0 0 L0 13.5 L3.4 10.4 L5.8 15.2 L8 14.1 L5.7 9.5 L10 9.2Z" fill="#e6e6e6"/></g></svg>
<svg style="left:402.5px;top:113.5px;" width="9" height="9" viewBox="0 0 9 9"><rect x="2.500" y="0.500" width="6" height="6" fill="#888" stroke="#e6e6e6" stroke-width="0.900"/><rect x="0.500" y="2.500" width="6" height="6" fill="#e6e6e6"/></svg>
<svg style="left:415px;top:113.5px;" width="9" height="9" viewBox="0 0 9 9"><rect x="2.500" y="0.500" width="6" height="6" fill="#e6e6e6"/><rect x="0.500" y="2.500" width="6" height="6" fill="#888" stroke="#e6e6e6" stroke-width="0.900"/></svg>
<svg style="left:427.5px;top:113.5px;" width="9" height="9" viewBox="0 0 9 9"><rect x="0.500" y="0.500" width="8" height="8" fill="none" stroke="#e6e6e6" stroke-width="1"/><path d="M2.200 2.200 L6.800 6.800 M6.800 6.800 V4 M6.800 6.800 H4" stroke="#e6e6e6" stroke-width="1" fill="none"/></svg>
<svg style="left:448px;top:113.5px;" width="9" height="9" viewBox="0 0 9 9"><circle cx="4.500" cy="4.500" r="2.800" fill="none" stroke="#e6e6e6" stroke-width="2.400" stroke-dasharray="2.200 1"/></svg>
<div style="left:459px;top:112.5px;width:25.5px;height:11.5px;background:#2b2b2b;"></div>
<div class="t" style="left:462px;top:112.5px;height:12px;line-height:12px;font-size:8.4px;color:#dcdcdc;transform:scaleX(0.856);">0.00</div>
<svg style="left:489px;top:113.5px;" width="9" height="9" viewBox="0 0 9 9"><circle cx="4.500" cy="4.500" r="3.800" fill="#e6e6e6"/><path d="M4.500 0.700 A3.800 3.800 0 0 0 4.500 8.300Z" fill="#333"/></svg>
<div style="left:499.5px;top:112.5px;width:26px;height:11.5px;background:#2b2b2b;"></div>
<div class="t" style="left:502.5px;top:112.5px;height:12px;line-height:12px;font-size:8.4px;color:#dcdcdc;transform:scaleX(0.856);">1.00</div>
<div style="left:527.5px;top:111.5px;width:12px;height:12.5px;background:#3a9cc0;border-radius:1px"></div>
<svg style="left:527.5px;top:111.5px;" width="12" height="12.5" viewBox="0 0 12 12.5"><circle cx="6" cy="6.250" r="3.800" fill="none" stroke="#d8f4fc" stroke-width="1"/><path d="M4 6.250 H8" stroke="#d8f4fc" stroke-width="1"/></svg>
<div style="left:540.5px;top:112px;width:95px;height:12px;background:#5d5d5d;border-radius:1px"></div>
<div class="t" style="left:543px;top:112.5px;height:12px;line-height:12px;font-size:8.4px;color:#dcdcdc;transform:scaleX(0.834);">sRGB gamma</div>
<svg style="left:626.5px;top:116px;" width="8" height="6" viewBox="0 0 8 6"><path d="M0.500 0.800 L7 0.800 L3.750 4.800Z" fill="#e0e0e0"/></svg>
<div style="left:30.6px;top:124.6px;width:1019.5px;height:411px;background:#b1b1b1;"></div>
<svg style="left:0;top:0" width="1280" height="720" viewBox="0 0 1280 720">
<defs>
<linearGradient id="gth" x1="0" y1="0" x2="0" y2="1"><stop offset="0" stop-color="#2a2a2a"/><stop offset="0.35" stop-color="#3e3e3e"/><stop offset="1" stop-color="#1c1c1c"/></linearGradient>
<linearGradient id="gsh" x1="0" y1="0" x2="1" y2="1"><stop offset="0" stop-color="#333"/><stop offset="0.5" stop-color="#3c3c3c"/><stop offset="1" stop-color="#1e1e1e"/></linearGradient>
<radialGradient id="gjk" cx="0.55" cy="0.5" r="0.55"><stop offset="0" stop-color="#3a3a3a"/><stop offset="1" stop-color="#1d1d1d"/></radialGradient>
<radialGradient id="ghr" cx="0.45" cy="0.4" r="0.6"><stop offset="0" stop-color="#3c3c3c"/><stop offset="1" stop-color="#1c1c1c"/></radialGradient>
<linearGradient id="ggun" x1="0" y1="0" x2="1" y2="0"><stop offset="0" stop-color="#2a2a2a"/><stop offset="0.3" stop-color="#5a5a5a"/><stop offset="0.5" stop-color="#8c8c8c"/><stop offset="0.7" stop-color="#484848"/><stop offset="1" stop-color="#222"/></linearGradient>
</defs>
<polygon fill="#1f1f1f" points="392.5,307.5 395.6,301.2 405,295 416.5,288.7 424.8,283.5 432.1,278.3 439.4,275.2 446.7,279.4 455,286.7 463.3,297.1 451.9,302.3 440.4,305.4 430,311.7 421.7,316.9 413.3,319 407.1,314.8 398.7,315.8 393.5,312.7"/><polygon fill="#8e1d1d" points="418.5,286.7 424.8,283.5 425.8,303.3 420.6,305.4"/><polygon fill="#9a2020" points="409.2,315.8 424.8,311.7 425.8,317.9 415.4,320.5 410,319"/><polygon fill="#444" points="398,303 401.5,300.5 405,312 401,314"/><polygon fill="url(#gth)" points="484.2,302.3 488.3,299.2 498.7,287.7 493.5,283.5 505,289.8 521.7,294 540,298.1 563.7,305.3 573.4,284 589,270.3 614.2,250.9 620,246 633.7,253.8 620,266.4 604.5,284 591.9,301.4 586,317 581,326.7 565.6,334.5 561.7,332.6 540,327.3 525.8,326.2 509.2,323.1 492.5,319 484.2,313.7 482.1,307.5"/><polygon fill="#3a3a3a" points="573.4,284 589,270.3 614.2,250.9 620,246 626,249.5 604,268 585,290 570,312 563.7,305.3"/><polygon fill="#1d1d1d" points="626,249.5 633.7,253.8 620,266.4 604.5,284 591.9,301.4 586,317 578,315 590,292 606,272"/><polygon fill="#4a4a4a" points="563,318 572,314 581,326.7 565.6,334.5 561.7,332.6"/><polygon fill="#3f3f3f" points="577,311 590,300 592,302 586,317 581,320"/><polygon fill="#474747" points="487.3,277.3 493.5,283.5 498.7,287.7 488.3,299.2 484.2,302.3 477.9,290.8 484.2,284.6"/><polygon fill="#c9a597" points="474.8,261.7 477.9,263.7 487.3,277.3 484.2,284.6 477.9,289.8 471.7,282.5 466.5,278.3 471.7,273.1"/><polygon fill="#d3ab9c" points="472.7,309.6 482.1,307.5 486.2,311.7 477.9,317.9 467.5,324.2 455,330.4 446.7,334.6 443.5,330.4 450.8,325.2 461.2,317.9 469.6,311.7"/><polygon fill="url(#gjk)" points="415.8,226.3 418.5,220 422.7,213.7 426.9,209.6 430,215.8 435.2,223.1 442.5,228.3 452.9,236.7 463.3,246.7 471.7,257.5 474.8,264.8 471.7,273.1 467.5,278.3 473.5,283 479.5,290.5 484.5,298 486,303.5 483,308 472,309.5 462.3,301.2 452,289 442.5,278.5 438,274.5 435.2,270 434.6,263.7 440.4,255.4 438.3,247.1 430,239.8 421.7,235.6 416.5,232.5"/><polygon fill="#555" points="472,309.5 483,308 486,303.5 482.5,304 470,306.5"/><polygon fill="#1a1a1a" points="422.7,213.7 426.9,208 430,206.3 432.1,216.9 430,218"/><polygon fill="#b24a22" points="429,206.5 434.6,205.8 438.3,211.7 437.9,222.1 435.2,223.1 432.1,216.9 428.3,210.6"/><path fill="url(#ghr)" d="M392.5 252.5 C393.2 248.3 391.9 250.4 394.4 246.2 C396.9 242.0 395.6 243.3 400.0 240.0 C404.4 236.7 402.1 237.9 407.5 236.2 C412.9 234.5 410.4 234.8 416.2 235.0 C422.0 235.2 419.2 234.4 425.0 236.9 C430.8 239.4 429.1 238.1 433.7 242.5 C438.3 246.9 436.6 245.4 438.7 250.0 C440.8 254.6 441.2 252.9 440.0 256.2 C438.8 259.5 437.5 257.1 435.0 260.0 C432.5 262.9 434.2 261.3 432.5 265.0 C430.8 268.7 432.1 267.5 430.0 271.2 C427.9 274.9 429.1 274.8 426.2 276.2 C423.3 277.6 424.5 274.2 421.2 275.5 C417.9 276.8 419.9 276.8 416.2 280.0 C412.5 283.2 413.7 283.8 410.0 285.0 C406.3 286.2 408.8 286.2 405.0 283.7 C401.2 281.2 402.2 282.9 398.7 277.5 C395.2 272.1 396.6 273.8 394.4 267.5 C392.2 261.2 392.8 263.7 392.2 258.7 C391.6 253.7 391.8 256.7 392.5 252.5Z"/><path d="M436 254 Q420 240 399 247 M436 256 Q416 246 395 258 M435 258 Q414 254 397 270 M433 261 Q414 262 402 279 M431 265 Q418 268 410 282" stroke="#505050" stroke-width="1.300" fill="none" opacity="0.750"/><polygon fill="#c9a597" points="431,262 434,264 432.5,276 429.5,278"/><polygon fill="url(#ggun)" points="427.3,276 434.5,276 433,300 432.3,343 424,343 424.6,310"/><polygon fill="#b5582a" points="423.3,343 431.9,343 431.3,355 429.8,366 423.3,366 422.8,352"/><polygon fill="#2c2c2c" points="424.2,366 428.8,366 427.6,405 427.2,420 424,420 424,400"/><rect x="423" y="408" width="5" height="10.500" fill="#333"/><polygon fill="#1c1c1c" points="438,331 444,328.5 449,337 442,342 438,338"/><polygon fill="#a52222" points="430,333 438,331 441.5,338 440,345 432,346.5 429,341"/><polygon fill="#1c1c1c" points="420,334 425,332 426,344 421,346"/><path d="M435 311.700 L448.300 358.300 M416 343.500 L430 341.600" stroke="#8c8c8c" stroke-width="0.700" fill="none"/><path fill="#222" d="M617.5 244.5 C617.2 240.6 620.6 240.2 623.5 235.3 C626.4 230.4 626.0 229.1 628.5 226.0 C631.0 222.9 630.2 224.0 633.0 223.8 C635.8 223.6 635.8 223.5 639.0 225.3 C642.2 227.1 640.7 228.2 645.0 230.5 C649.3 232.8 649.7 231.3 655.0 234.0 C660.3 236.7 660.5 236.6 665.0 240.5 C669.5 244.4 669.6 244.4 672.0 248.5 C674.4 252.6 674.5 252.7 674.0 256.0 C673.5 259.3 672.9 260.1 670.0 261.0 C667.1 261.9 667.5 261.6 663.0 259.5 C658.5 257.4 657.5 254.7 653.0 253.0 C648.5 251.3 650.3 252.9 646.0 253.3 C641.7 253.7 641.7 253.8 637.0 254.5 C632.3 255.2 631.8 257.2 628.5 256.0 C625.2 254.8 627.4 253.1 624.5 250.0 C621.6 246.9 617.8 248.4 617.5 244.5Z"/><path fill="#8a2022" d="M633.0 230.5 C635.1 228.4 636.0 229.5 640.0 230.0 C644.0 230.5 643.5 230.9 648.0 232.5 C652.5 234.1 652.2 233.2 657.0 236.0 C661.8 238.8 662.1 239.1 666.0 243.0 C669.9 246.9 669.8 246.9 671.5 250.5 C673.2 254.1 673.3 254.0 672.5 256.5 C671.7 259.0 671.6 259.8 668.5 259.8 C665.4 259.8 665.4 259.1 661.0 256.5 C656.6 253.9 656.5 252.8 652.0 250.0 C647.5 247.2 648.0 248.1 644.0 246.0 C640.0 243.9 640.2 244.1 637.0 242.0 C633.8 239.9 633.1 241.1 632.0 238.0 C630.9 234.9 630.9 232.6 633.0 230.5Z"/><polygon fill="#7e1c1e" points="617.8,244.8 623.5,237.5 631,240 632,248 624.5,250.3"/><polygon fill="#454545" points="638.5,240 646,243 648,252 640,253.5 636,249"/><path d="M656.500 250 L659 255.500 M659.500 248.500 L662.500 254.500 M662.500 247.500 L665 252.500" stroke="#5a4a4a" stroke-width="1.400"/><path d="M630.700 249 V398" stroke="#c4b6a0" stroke-width="1.300"/><path d="M627.600 394.500 H633.800 L630.700 406.500Z" fill="#f1c26e"/><path d="M668 241.800 H784" stroke="#dc7878" stroke-width="0.800"/><path d="M783 237.800 L797.500 241.900 L783 246Z" fill="#e31212"/><path d="M525 195 L540.300 197.400 L584.700 209.100 L631 242.600" stroke="#4488e2" stroke-width="1.700" fill="none"/><circle cx="525" cy="195" r="1.300" fill="#2255aa"/><circle cx="540.300" cy="197.400" r="1.300" fill="#2255aa"/><path d="M631 242.600 Q635 249 637 256.700 Q642 272 645 291 Q646.500 303 646 315 Q645.600 327 644.400 339.400 Q642.500 354 640.300 367.600 Q638 383 635 397.800 Q633 404 629.800 410 L620 428 L596 445" stroke="#96e044" stroke-width="2.200" fill="none" stroke-linejoin="round"/><circle cx="645" cy="291" r="1.200" fill="#3c6a1c"/><circle cx="635" cy="397.8" r="1.200" fill="#3c6a1c"/><circle cx="620" cy="428" r="1.200" fill="#3c6a1c"/><circle cx="596.5" cy="444.7" r="1.200" fill="#3c6a1c"/><rect x="625" y="235.300" width="13.600" height="13.700" fill="#7fa8cc" fill-opacity="0.22" stroke="#90acc4" stroke-width="0.800"/><rect x="738.700" y="349.600" width="13" height="13" fill="#8fce93"/><rect x="640.500" y="335" width="7" height="6" fill="none" stroke="#444" stroke-width="0.900"/><rect x="641.300" y="335.800" width="5.400" height="4.400" fill="none" stroke="#eee" stroke-width="0.700"/><path d="M643.500 338.500 L643.500 350 L646.200 347.500 L648.200 352 L650 351.200 L648 346.800 L651.700 346.500Z" fill="#fff" stroke="#222" stroke-width="0.800"/><path d="M47.500 527 L56 524.500" stroke="#e08080" stroke-width="0.800"/><path d="M47.500 527 V531" stroke="#6070e0" stroke-width="0.800"/><text x="45" y="525" font-size="5.500" font-weight="bold" fill="#50e050" font-family="Liberation Sans,sans-serif">y</text><text x="56.500" y="525.500" font-size="5.500" font-weight="bold" fill="#e02020" font-family="Liberation Sans,sans-serif">x</text><text x="45.500" y="535.500" font-size="5.500" font-weight="bold" fill="#2020c0" font-family="Liberation Sans,sans-serif">z</text></svg>
<div class="t b" style="left:1012.6px;top:520.2px;height:12px;line-height:12px;font-size:8.6px;color:#fafafa;transform:scaleX(0.893);-webkit-text-stroke:0.25px #fafafa">13 fps</div>
<div style="left:1050.3px;top:275.2px;width:4.5px;height:260.5px;background:#414141;"></div>
<div style="left:1054.8px;top:275.2px;width:211.2px;height:37.8px;background:#303030;"></div>
<div style="left:1110px;top:314.5px;width:85px;height:1.2px;background:#5a5a5a;"></div>
<div style="left:1055px;top:319px;width:211px;height:14px;background:#404040;"></div>
<div style="left:1095px;top:320.5px;width:30.5px;height:12.5px;background:#4f4f4f;"></div>
<div class="t" style="left:1062px;top:320.5px;height:12px;line-height:12px;font-size:8.8px;color:#9c9c9c;transform:scaleX(0.832);">Display</div>
<div class="t" style="left:1101.5px;top:320.5px;height:12px;line-height:12px;font-size:8.8px;color:#f2f2f2;transform:scaleX(0.873);">Anim</div>
<div style="left:1055px;top:333px;width:211px;height:203px;background:#4a4a4a;"></div>
<div class="t" style="left:1060.5px;top:333.5px;height:12px;line-height:12px;font-size:8.8px;color:#d8d8d8;transform:scaleX(0.814);">Layers</div>
<div class="t" style="left:1091.5px;top:333.5px;height:12px;line-height:12px;font-size:8.8px;color:#d8d8d8;transform:scaleX(0.857);">Options</div>
<div class="t" style="left:1127px;top:333.5px;height:12px;line-height:12px;font-size:8.8px;color:#d8d8d8;transform:scaleX(0.840);">Show</div>
<div class="t" style="left:1155px;top:333.5px;height:12px;line-height:12px;font-size:8.8px;color:#d8d8d8;transform:scaleX(0.912);">Help</div>
<div class="t b" style="left:1059.5px;top:349.500px;height:11px;line-height:11px;font-size:8.500px;color:#f07848">0</div>
<svg style="left:1064.5px;top:348.5px;" width="6" height="6" viewBox="0 0 6 6"><path d="M3 0 V6 M0 3 H6" stroke="#f07848" stroke-width="0.900"/><circle cx="3" cy="3" r="1" fill="#f4b090"/></svg>
<div class="t b" style="left:1074px;top:349.500px;height:11px;line-height:11px;font-size:8.500px;color:#f07848">0</div>
<svg style="left:1079px;top:348.5px;" width="6" height="6" viewBox="0 0 6 6"><path d="M3 0 V6 M0 3 H6" stroke="#f07848" stroke-width="0.900"/><circle cx="3" cy="3" r="1" fill="#f4b090"/></svg>
<div class="t b" style="left:1090px;top:349.500px;height:11px;line-height:11px;font-size:8.500px;color:#f07848">1</div>
<svg style="left:1095px;top:348.5px;" width="6" height="6" viewBox="0 0 6 6"><path d="M3 0 V6 M0 3 H6" stroke="#f07848" stroke-width="0.900"/><circle cx="3" cy="3" r="1" fill="#f4b090"/></svg>
<svg style="left:1079px;top:353px;" width="5" height="6" viewBox="0 0 5 6"><path d="M0 0 L4.500 3 L0 6Z" fill="#e8e8e8"/></svg>
<svg style="left:1094px;top:353px;" width="7" height="6" viewBox="0 0 7 6"><path d="M0 3 L3 0.500 L6 3 L3 5.500Z" fill="#e8e8e8"/></svg>
<svg style="left:1202px;top:349.5px;" width="12" height="10" viewBox="0 0 12 10"><path d="M0.500 5 L6 0.800 V9.200Z" fill="#e8e8e8"/><path d="M9 1 V8 M7.300 3 L9 1 L10.700 3" stroke="#3cc0d0" stroke-width="1.400" fill="none"/></svg>
<svg style="left:1218px;top:349.5px;" width="12" height="10" viewBox="0 0 12 10"><path d="M0.500 5 L6 0.800 V9.200Z" fill="#e8e8e8"/><path d="M9 1 V8 M7.300 6 L9 8 L10.700 6" stroke="#3cc0d0" stroke-width="1.400" fill="none"/></svg>
<svg style="left:1236.5px;top:349px;" width="13" height="11" viewBox="0 0 13 11"><path d="M0.500 6.500 L6.500 2 L10 5.500 L4 10Z" fill="#e8e8e8"/><path d="M9.500 0.500 V5 M7.300 2.700 H11.700" stroke="#3cc0d0" stroke-width="1.200"/></svg>
<svg style="left:1252.5px;top:349px;" width="13" height="11" viewBox="0 0 13 11"><path d="M0.500 6.500 L6.500 2 L10 5.500 L4 10Z" fill="#e8e8e8"/><circle cx="9.500" cy="3" r="2.300" fill="#3cc0d0"/></svg>
<div style="left:1056.7px;top:362.5px;width:206.8px;height:155.7px;background:#313131;"></div>
<div style="left:1057px;top:363px;width:206.5px;height:13.5px;background:#5085b0;"></div>
<div style="left:1057.5px;top:363.5px;width:15px;height:12.5px;background:#5a5a5a;border:0.5px solid #6c6c6c"></div>
<div style="left:1073px;top:363.5px;width:15px;height:12.5px;background:#5a5a5a;border:0.5px solid #6c6c6c"></div>
<div style="left:1088.5px;top:363.5px;width:15px;height:12.5px;background:#5a5a5a;border:0.5px solid #6c6c6c"></div>
<div style="left:1104px;top:363.5px;width:15px;height:12.5px;background:#5f5f5f;"></div>
<div style="left:1104px;top:377.5px;width:15px;height:13px;background:#5a5a5a;"></div>
<div style="left:1057.5px;top:377px;width:15px;height:13.5px;background:#262626;"></div>
<svg style="left:1060px;top:364px;" width="10" height="12" viewBox="0 0 10 12"><g transform="translate(1.500,0)"><rect x="1" y="5" width="8" height="6" rx="0.800" fill="#e8c020"/><path d="M2.800 5 V3.300 a2.200 2.200 0 0 1 4.400 0 V5" fill="none" stroke="#e8c020" stroke-width="1.300"/><rect x="4.300" y="7" width="1.400" height="2.200" fill="#5a4400"/></g><path d="M1.300 5.500 V3.500 a2 2 0 0 1 3.500 -1.300" fill="none" stroke="#c8c8c8" stroke-width="1.100"/></svg>
<svg style="left:1060px;top:377.5px;" width="10" height="12" viewBox="0 0 10 12"><rect x="1" y="5" width="8" height="6" rx="0.800" fill="#e8c020"/><path d="M2.800 5 V3.300 a2.200 2.200 0 0 1 4.400 0 V5" fill="none" stroke="#e8c020" stroke-width="1.300"/><rect x="4.300" y="7" width="1.400" height="2.200" fill="#5a4400"/></svg>
<svg style="left:1075.5px;top:366.5px;" width="10" height="7" viewBox="0 0 10 7"><rect x="0.500" y="0.500" width="9" height="5.500" rx="0.800" fill="#b8b8b8" stroke="#e0e0e0" stroke-width="0.800"/></svg>
<svg style="left:1091.5px;top:365.5px;" width="9" height="9" viewBox="0 0 9 9"><circle cx="4.500" cy="4.500" r="3.500" fill="none" stroke="#d8d8d8" stroke-width="1"/><path d="M2 7 L7 2" stroke="#d8d8d8" stroke-width="1"/></svg>
<div style="left:1110.5px;top:369px;width:2px;height:2px;background:#f0e040;border-radius:1px"></div>
<div style="left:1110.5px;top:382.5px;width:2px;height:2px;background:#f0e040;border-radius:1px"></div>
<div class="t b" style="left:1132.5px;top:366.0px;height:12px;line-height:12px;font-size:8.2px;color:#f4f4f4;transform:scaleX(0.818);">Attack</div>
<div class="t b" style="left:1132.5px;top:379.5px;height:12px;line-height:12px;font-size:8.2px;color:#f4f4f4;transform:scaleX(0.871);">BaseAnimation</div>
<div style="left:1252.5px;top:367.5px;width:4px;height:4px;background:#a0f0a0;border-radius:2px"></div>
<div style="left:1253.5px;top:382px;width:2px;height:2px;background:#e05050;border-radius:1px"></div>
<div class="t" style="left:1057px;top:522.0px;height:12px;line-height:12px;font-size:8.8px;color:#d8d8d8;transform:scaleX(0.881);">Weight</div>
<div style="left:1082px;top:520.8px;width:25px;height:12.2px;background:#2b2b2b;"></div>
<div class="t" style="left:1085px;top:522.0px;height:12px;line-height:12px;font-size:8.4px;color:#e0e0e0;transform:scaleX(0.785);">1.000</div>
<div style="left:1110px;top:527px;width:138px;height:2px;background:#383838;"></div>
<div style="left:1246.5px;top:522.5px;width:4px;height:10.5px;background:#d8d8d8;"></div>
<div style="left:1254px;top:520.5px;width:10px;height:12px;background:#585858;"></div>
<div class="t" style="left:1257px;top:520.5px;height:12px;line-height:12px;font-size:8px;color:#e8e8e8;transform:scaleX(0.843);">K</div>
<div style="left:1266px;top:275.2px;width:14px;height:262px;background:#484848;"></div>
<div class="t" style="left:1270px;top:279px;height:10px;line-height:10px;font-size:8px;color:#b0b0b0;transform-origin:0 0;transform:rotate(90deg) translate(0,-9px) scaleX(0.880)">Attribute Editor</div>
<div style="left:0px;top:535.8px;width:1280px;height:2.4px;background:#3c3c3c;"></div>
<div style="left:2px;top:541px;width:1px;height:34px;background:repeating-linear-gradient(#5e5e5e 0 1px,transparent 1px 2px)"></div>
<div style="left:4px;top:541px;width:1px;height:34px;background:repeating-linear-gradient(#5e5e5e 0 1px,transparent 1px 2px)"></div>
<div style="left:8px;top:540.6px;width:1075.5px;height:34.5px;background:#323232;"></div>
<div style="left:440.2px;top:540.6px;width:69.5px;height:24px;background:#5c5c5c;"></div>
<div style="left:440px;top:564.6px;width:69.7px;height:8.8px;background:#303030;border-radius:1.5px"></div>
<div class="t b" style="left:470.3px;top:563.2px;height:12px;line-height:12px;font-size:8px;color:#f6f6f6;transform:scaleX(0.955);">21</div>
<div style="left:11.85px;top:549px;width:2px;height:24.5px;background:#d4a6a8;"></div>
<div style="left:11.049999999999999px;top:540.6px;width:3.6px;height:10px;background:#9c1a32;"></div>
<div class="t" style="left:27.15px;top:540.3px;height:12px;line-height:12px;font-size:8.2px;color:#a4a4a4;transform:scaleX(0.987);">15</div>
<div style="left:82.91px;top:549px;width:2px;height:24.5px;background:#d4a6a8;"></div>
<div style="left:82.11px;top:540.6px;width:3.6px;height:10px;background:#9c1a32;"></div>
<div class="t" style="left:98.21px;top:540.3px;height:12px;line-height:12px;font-size:8.2px;color:#a4a4a4;transform:scaleX(0.987);">16</div>
<div style="left:153.97px;top:549px;width:2px;height:24.5px;background:#d4a6a8;"></div>
<div style="left:153.17px;top:540.6px;width:3.6px;height:10px;background:#9c1a32;"></div>
<div class="t" style="left:169.27px;top:540.3px;height:12px;line-height:12px;font-size:8.2px;color:#a4a4a4;transform:scaleX(0.987);">17</div>
<div style="left:225.03px;top:549px;width:2px;height:24.5px;background:#d4a6a8;"></div>
<div style="left:224.23px;top:540.6px;width:3.6px;height:10px;background:#9c1a32;"></div>
<div class="t" style="left:240.33px;top:540.3px;height:12px;line-height:12px;font-size:8.2px;color:#a4a4a4;transform:scaleX(0.987);">18</div>
<div style="left:296.09000000000003px;top:549px;width:2px;height:24.5px;background:#d4a6a8;"></div>
<div style="left:295.29px;top:540.6px;width:3.6px;height:10px;background:#9c1a32;"></div>
<div class="t" style="left:311.39000000000004px;top:540.3px;height:12px;line-height:12px;font-size:8.2px;color:#a4a4a4;transform:scaleX(0.987);">19</div>
<div style="left:367.15000000000003px;top:551px;width:2px;height:22.5px;background:#aca2a2;"></div>
<div class="t" style="left:382.45000000000005px;top:540.3px;height:12px;line-height:12px;font-size:8.2px;color:#a4a4a4;transform:scaleX(0.987);">20</div>
<div style="left:438.01000000000005px;top:551px;width:2px;height:22.5px;background:#b4aa8c;"></div>
<div style="left:437.81000000000006px;top:540.6px;width:2.6px;height:10.6px;background:#e6d640;"></div>
<div class="t" style="left:453.51000000000005px;top:540.3px;height:12px;line-height:12px;font-size:8.2px;color:#a4a4a4;transform:scaleX(0.987);">21</div>
<div style="left:509.27000000000004px;top:549px;width:2px;height:24.5px;background:#d4a6a8;"></div>
<div style="left:508.47px;top:540.6px;width:3.6px;height:10px;background:#9c1a32;"></div>
<div class="t" style="left:524.57px;top:540.3px;height:12px;line-height:12px;font-size:8.2px;color:#a4a4a4;transform:scaleX(0.987);">22</div>
<div style="left:580.33px;top:549px;width:2px;height:24.5px;background:#d4a6a8;"></div>
<div style="left:579.5300000000001px;top:540.6px;width:3.6px;height:10px;background:#9c1a32;"></div>
<div class="t" style="left:595.63px;top:540.3px;height:12px;line-height:12px;font-size:8.2px;color:#a4a4a4;transform:scaleX(0.987);">23</div>
<div style="left:651.39px;top:549px;width:2px;height:24.5px;background:#d4a6a8;"></div>
<div style="left:650.59px;top:540.6px;width:3.6px;height:10px;background:#9c1a32;"></div>
<div class="t" style="left:666.6899999999999px;top:540.3px;height:12px;line-height:12px;font-size:8.2px;color:#a4a4a4;transform:scaleX(0.987);">24</div>
<div style="left:722.45px;top:549px;width:2px;height:24.5px;background:#d4a6a8;"></div>
<div style="left:721.6500000000001px;top:540.6px;width:3.6px;height:10px;background:#9c1a32;"></div>
<div class="t" style="left:737.75px;top:540.3px;height:12px;line-height:12px;font-size:8.2px;color:#a4a4a4;transform:scaleX(0.987);">25</div>
<div style="left:793.5100000000001px;top:551px;width:2px;height:22.5px;background:#aca2a2;"></div>
<div class="t" style="left:808.8100000000001px;top:540.3px;height:12px;line-height:12px;font-size:8.2px;color:#a4a4a4;transform:scaleX(0.987);">26</div>
<div style="left:864.57px;top:551px;width:2px;height:22.5px;background:#aca2a2;"></div>
<div class="t" style="left:879.87px;top:540.3px;height:12px;line-height:12px;font-size:8.2px;color:#a4a4a4;transform:scaleX(0.987);">27</div>
<div style="left:935.63px;top:551px;width:2px;height:22.5px;background:#aca2a2;"></div>
<div class="t" style="left:950.93px;top:540.3px;height:12px;line-height:12px;font-size:8.2px;color:#a4a4a4;transform:scaleX(0.987);">28</div>
<div style="left:1006.69px;top:549px;width:2px;height:24.5px;background:#d4a6a8;"></div>
<div style="left:1005.8900000000001px;top:540.6px;width:3.6px;height:10px;background:#9c1a32;"></div>
<div class="t" style="left:1021.99px;top:540.3px;height:12px;line-height:12px;font-size:8.2px;color:#a4a4a4;transform:scaleX(0.987);">29</div>
<div style="left:1077.2px;top:540.6px;width:3.8px;height:34px;background:#8e1a30;"></div>
<div style="left:8px;top:573.3px;width:218.5px;height:1.8px;background:#f0b888;"></div>
<div style="left:226.5px;top:573.3px;width:710.4px;height:1.8px;background:#e6d84c;"></div>
<div style="left:936.9px;top:573.3px;width:147px;height:1.8px;background:#80ec98;"></div>
<div style="left:54px;top:564.7px;width:61px;height:8.8px;background:#ea7a6c;border-radius:1px"></div>
<div class="t" style="left:55.5px;top:563.3px;height:12px;line-height:12px;font-size:8px;color:#e03434;transform:scaleX(0.881);">FirstPartAnimation</div>
<div style="left:1012.4px;top:564px;width:60.4px;height:9.4px;background:#8cf09e;border-radius:1px"></div>
<div class="t" style="left:1013.8px;top:563.0px;height:12px;line-height:12px;font-size:8px;color:#38a84c;transform:scaleX(0.880);">FinalPartAnimaion</div>
<div style="left:1088.4px;top:544.4px;width:59px;height:12.4px;background:#2c2c2c;"></div>
<div class="t" style="left:1090.8px;top:545.3px;height:12px;line-height:12px;font-size:8.8px;color:#e4e4e4;transform:scaleX(0.868);">21</div>
<svg style="left:1155px;top:545px;" width="12" height="11" viewBox="0 0 12 11"><rect x="0.300" y="1" width="1.500" height="9" fill="#e4e4e4"/><path d="M6.500 1 V10 L2 5.500Z M11.500 1 V10 L7 5.500Z" fill="#e4e4e4"/></svg>
<svg style="left:1171px;top:545px;" width="10" height="11" viewBox="0 0 10 11"><rect x="0.300" y="1" width="1.500" height="9" fill="#e4e4e4"/><path d="M8.500 1 V10 L2.500 5.500Z" fill="#e4e4e4"/></svg>
<svg style="left:1186px;top:545px;" width="11" height="11" viewBox="0 0 11 11"><rect x="1.800" y="0.500" width="1.800" height="10" fill="#f08838"/><path d="M10 1 V10 L4 5.500Z" fill="#e4e4e4"/></svg>
<svg style="left:1201px;top:545px;" width="10" height="11" viewBox="0 0 10 11"><path d="M9 0.500 V10.500 L0.500 5.500Z" fill="#e4e4e4"/></svg>
<svg style="left:1216px;top:545px;" width="10" height="11" viewBox="0 0 10 11"><path d="M1 0.500 V10.500 L9.500 5.500Z" fill="#e4e4e4"/></svg>
<svg style="left:1230px;top:545px;" width="11" height="11" viewBox="0 0 11 11"><rect x="7.500" y="0.500" width="1.800" height="10" fill="#f08838"/><path d="M1 1 V10 L7 5.500Z" fill="#e4e4e4"/></svg>
<svg style="left:1246px;top:545px;" width="10" height="11" viewBox="0 0 10 11"><rect x="8.200" y="1" width="1.500" height="9" fill="#e4e4e4"/><path d="M1.500 1 V10 L7.500 5.500Z" fill="#e4e4e4"/></svg>
<svg style="left:1261px;top:545px;" width="12" height="11" viewBox="0 0 12 11"><rect x="10.200" y="1" width="1.500" height="9" fill="#e4e4e4"/><path d="M0.500 1 V10 L5 5.500Z M5.500 1 V10 L10 5.500Z" fill="#e4e4e4"/></svg>
<div style="left:0px;top:576.5px;width:1280px;height:56.5px;background:#4a4a4a;"></div>
<div style="left:0px;top:576px;width:1280px;height:1px;background:#3a3a3a;"></div>
<div style="left:2px;top:581px;width:1px;height:49px;background:repeating-linear-gradient(#5e5e5e 0 1px,transparent 1px 2px)"></div>
<div style="left:4px;top:581px;width:1px;height:49px;background:repeating-linear-gradient(#5e5e5e 0 1px,transparent 1px 2px)"></div>
<svg style="left:14px;top:584px;" width="14" height="17" viewBox="0 0 14 17"><path d="M2.300 4.500 V9.500 a4.700 4.700 0 0 0 9.400 0 V4.500" fill="none" stroke="#f4f4f4" stroke-width="2.500"/><circle cx="2.300" cy="2" r="1.100" fill="#f06030"/><circle cx="11.700" cy="2" r="1.100" fill="#e8e040"/></svg>
<div style="left:81px;top:592px;width:9.5px;height:1.6px;background:#5fd068;"></div>
<div style="left:94px;top:584.5px;width:37px;height:16px;background:#2b2b2b;border-radius:1px"></div>
<div class="t" style="left:97px;top:586.7px;height:12px;line-height:12px;font-size:8.4px;color:#dedede;transform:scaleX(0.856);">0.001</div>
<svg style="left:138px;top:586px;" width="10" height="12" viewBox="0 0 10 12"><path d="M9 4 H1.500 M4.500 1 L1.500 4 L4.500 7" stroke="#5fd068" stroke-width="1.300" fill="none"/><path d="M0.500 10.500 H9" stroke="#5fd068" stroke-width="1.300"/></svg>
<svg style="left:153px;top:586px;" width="10" height="12" viewBox="0 0 10 12"><path d="M1 4 H8.500 M5.500 1 L8.500 4 L5.500 7" stroke="#5fd068" stroke-width="1.300" fill="none"/><path d="M1 10.500 H9.500" stroke="#5fd068" stroke-width="1.300"/></svg>
<svg style="left:167px;top:584px;" width="13" height="14" viewBox="0 0 13 14"><circle cx="3" cy="3" r="2.200" fill="#d8d8d8"/><path d="M12 7 H5 M8 4 L5 7 L8 10" stroke="#5fd068" stroke-width="1.300" fill="none"/><path d="M2 13 H12" stroke="#5fd068" stroke-width="1.300" stroke-dasharray="2.200 1.400"/></svg>
<svg style="left:182.5px;top:584px;" width="14" height="14" viewBox="0 0 14 14"><circle cx="3" cy="3" r="2.200" fill="#d8d8d8"/><path d="M4 7 H11.500 M8.500 4 L11.500 7 L8.500 10" stroke="#5fd068" stroke-width="1.300" fill="none"/><path d="M3 13 H13" stroke="#5fd068" stroke-width="1.300" stroke-dasharray="2.200 1.400"/></svg>
<div style="left:198px;top:584.5px;width:27.5px;height:16px;background:#2b2b2b;border-radius:1px"></div>
<div class="t" style="left:201px;top:586.7px;height:12px;line-height:12px;font-size:8.4px;color:#dedede;transform:scaleX(0.749);">1</div>
<svg style="left:231.5px;top:587px;" width="10" height="11" viewBox="0 0 10 11"><path d="M3 2.500 A4 4 0 1 0 7 2.500" fill="none" stroke="#5fd068" stroke-width="1.300"/><path d="M5 0.500 V5" stroke="#5fd068" stroke-width="1.300"/></svg>
<svg style="left:247.5px;top:586px;" width="12" height="13" viewBox="0 0 12 13"><circle cx="6" cy="2.800" r="2.300" fill="#5fd068"/><path d="M1 8.500 Q6 2.500 11 8.500 L9 8.500 L9 10.500 H3 V8.500Z" fill="#5fd068"/><rect x="4" y="11" width="4" height="1.800" fill="#e8e8e8"/></svg>
<svg style="left:264px;top:588px;" width="13" height="9" viewBox="0 0 13 9"><path d="M0 1.500 H12 M0 6.500 H12" stroke="#5fd068" stroke-width="1.800" stroke-dasharray="2.600 1.800"/></svg>
<div style="left:284px;top:589.5px;width:125px;height:6px;background:#3d3d3d;border-radius:3px"></div>
<div style="left:286.8px;top:590.5px;width:4px;height:4px;background:#6edc74;"></div>
<div style="left:402.2px;top:590.5px;width:4px;height:4px;background:#6edc74;"></div>
<div style="left:302.2px;top:592px;width:1.3px;height:1.3px;background:#6edc74;"></div>
<div style="left:360.79999999999995px;top:592px;width:1.3px;height:1.3px;background:#6edc74;"></div>
<div style="left:316.2px;top:592px;width:1.3px;height:1.3px;background:#6edc74;"></div>
<div style="left:374.79999999999995px;top:592px;width:1.3px;height:1.3px;background:#6edc74;"></div>
<div style="left:330.2px;top:592px;width:1.3px;height:1.3px;background:#6edc74;"></div>
<div style="left:388.79999999999995px;top:592px;width:1.3px;height:1.3px;background:#6edc74;"></div>
<div style="left:338px;top:584.5px;width:16.4px;height:16px;background:#3f3f3f;border-radius:3px;border:0.5px solid #4c4c4c"></div>
<div class="t" style="left:341.3px;top:586.7px;height:12px;line-height:12px;font-size:7.4px;color:#4fb058;transform:scaleX(0.993);">EA</div>
<div style="left:417px;top:589.5px;width:125px;height:6px;background:#3d3d3d;border-radius:3px"></div>
<div style="left:419.8px;top:590.5px;width:4px;height:4px;background:#6edc74;"></div>
<div style="left:535.2px;top:590.5px;width:4px;height:4px;background:#6edc74;"></div>
<div style="left:435.2px;top:592px;width:1.3px;height:1.3px;background:#6edc74;"></div>
<div style="left:494.29999999999995px;top:592px;width:1.3px;height:1.3px;background:#6edc74;"></div>
<div style="left:449.2px;top:592px;width:1.3px;height:1.3px;background:#6edc74;"></div>
<div style="left:508.29999999999995px;top:592px;width:1.3px;height:1.3px;background:#6edc74;"></div>
<div style="left:463.2px;top:592px;width:1.3px;height:1.3px;background:#6edc74;"></div>
<div style="left:522.3px;top:592px;width:1.3px;height:1.3px;background:#6edc74;"></div>
<div style="left:471.5px;top:584.5px;width:16.4px;height:16px;background:#3f3f3f;border-radius:3px;border:0.5px solid #4c4c4c"></div>
<div class="t" style="left:474.8px;top:586.7px;height:12px;line-height:12px;font-size:7.4px;color:#4fb058;transform:scaleX(0.993);">SA</div>
<div style="left:551.7px;top:590.5px;width:4px;height:4px;background:#e4e4e4;"></div>
<div style="left:560.5px;top:589.5px;width:104.5px;height:6px;background:#3d3d3d;border-radius:3px"></div>
<div style="left:563.3px;top:590.5px;width:4px;height:4px;background:#6edc74;"></div>
<div style="left:658.2px;top:590.5px;width:4px;height:4px;background:#6edc74;"></div>
<div style="left:575.6999999999999px;top:592px;width:1.3px;height:1.3px;background:#6edc74;"></div>
<div style="left:626.0px;top:592px;width:1.3px;height:1.3px;background:#6edc74;"></div>
<div style="left:586.6999999999999px;top:592px;width:1.3px;height:1.3px;background:#6edc74;"></div>
<div style="left:637.0px;top:592px;width:1.3px;height:1.3px;background:#6edc74;"></div>
<div style="left:597.6999999999999px;top:592px;width:1.3px;height:1.3px;background:#6edc74;"></div>
<div style="left:648.0px;top:592px;width:1.3px;height:1.3px;background:#6edc74;"></div>
<div style="left:604.7px;top:584.5px;width:16.4px;height:16px;background:#3f3f3f;border-radius:3px;border:0.5px solid #4c4c4c"></div>
<div class="t" style="left:608.0px;top:586.7px;height:12px;line-height:12px;font-size:7.4px;color:#4fb058;transform:scaleX(1.036);">SF</div>
<div style="left:669px;top:590.5px;width:4px;height:4px;background:#e4e4e4;"></div>
<div style="left:692px;top:589.5px;width:125px;height:6px;background:#3d3d3d;border-radius:3px"></div>
<div style="left:694.8px;top:590.5px;width:4px;height:4px;background:#e8dc3c;"></div>
<div style="left:810.2px;top:590.5px;width:4px;height:4px;background:#e8dc3c;"></div>
<div style="left:710.1999999999999px;top:592px;width:1.3px;height:1.3px;background:#e8dc3c;"></div>
<div style="left:771.3px;top:592px;width:1.3px;height:1.3px;background:#e8dc3c;"></div>
<div style="left:724.1999999999999px;top:592px;width:1.3px;height:1.3px;background:#e8dc3c;"></div>
<div style="left:785.3px;top:592px;width:1.3px;height:1.3px;background:#e8dc3c;"></div>
<div style="left:738.1999999999999px;top:592px;width:1.3px;height:1.3px;background:#e8dc3c;"></div>
<div style="left:799.3px;top:592px;width:1.3px;height:1.3px;background:#e8dc3c;"></div>
<div style="left:748.5px;top:584.5px;width:16.4px;height:16px;background:#3f3f3f;border-radius:3px;border:0.5px solid #4c4c4c"></div>
<div class="t" style="left:751.8px;top:586.7px;height:12px;line-height:12px;font-size:7.4px;color:#c8bc30;transform:scaleX(0.852);">TW</div>
<div style="left:827px;top:589.5px;width:125px;height:6px;background:#3d3d3d;border-radius:3px"></div>
<div style="left:829.8px;top:590.5px;width:4px;height:4px;background:#e8dc3c;"></div>
<div style="left:945.2px;top:590.5px;width:4px;height:4px;background:#e8dc3c;"></div>
<div style="left:845.1999999999999px;top:592px;width:1.3px;height:1.3px;background:#e8dc3c;"></div>
<div style="left:903.8px;top:592px;width:1.3px;height:1.3px;background:#e8dc3c;"></div>
<div style="left:859.1999999999999px;top:592px;width:1.3px;height:1.3px;background:#e8dc3c;"></div>
<div style="left:917.8px;top:592px;width:1.3px;height:1.3px;background:#e8dc3c;"></div>
<div style="left:873.1999999999999px;top:592px;width:1.3px;height:1.3px;background:#e8dc3c;"></div>
<div style="left:931.8px;top:592px;width:1.3px;height:1.3px;background:#e8dc3c;"></div>
<div style="left:881px;top:584.5px;width:16.4px;height:16px;background:#3f3f3f;border-radius:3px;border:0.5px solid #4c4c4c"></div>
<div class="t" style="left:884.3px;top:586.7px;height:12px;line-height:12px;font-size:7.4px;color:#c8bc30;transform:scaleX(0.993);">BE</div>
<svg style="left:967.5px;top:586px;" width="14" height="13" viewBox="0 0 14 13"><path d="M0.500 10 Q0.500 2 5 2 Q9.500 2 10 10 L12 10" stroke="#f0843a" stroke-width="1.600" fill="none"/></svg>
<svg style="left:984px;top:586px;" width="14" height="13" viewBox="0 0 14 13"><path d="M0.500 11 Q5 11 5.500 6.500 Q6 2 11.500 2" stroke="#f0843a" stroke-width="1.600" fill="none"/></svg>
<svg style="left:1000px;top:586px;" width="14" height="13" viewBox="0 0 14 13"><path d="M0.500 2 Q6 2 6 6.500 Q6.500 11 11.500 10.500" stroke="#f0843a" stroke-width="1.600" fill="none"/></svg>
<svg style="left:1016px;top:586px;" width="14" height="13" viewBox="0 0 14 13"><path d="M0.500 11 L2.500 11 Q3 2 6.500 2 Q10 2 10.500 11 L13 11" stroke="#f0843a" stroke-width="1.600" fill="none"/></svg>
<svg style="left:1033px;top:586px;" width="14" height="13" viewBox="0 0 14 13"><path d="M0.500 10.500 L4 10.500 Q6 6 8 6 L8 2.500 L12.500 2.500" stroke="#f0843a" stroke-width="1.600" fill="none"/></svg>
<svg style="left:1049.5px;top:586px;" width="14" height="13" viewBox="0 0 14 13"><path d="M1 2 L11.500 11" stroke="#f0843a" stroke-width="1.600" fill="none"/></svg>
<svg style="left:1064.5px;top:586px;" width="14" height="13" viewBox="0 0 14 13"><path d="M0.500 11 H6 V2.500 H12" stroke="#f0843a" stroke-width="1.600" fill="none"/></svg>
<svg style="left:1090px;top:586.5px;" width="13" height="12" viewBox="0 0 13 12"><path d="M6.500 0.500 L9 6 H4Z" fill="#e05050"/><path d="M0.500 9 H12.500" stroke="#e05050" stroke-width="1.300" stroke-dasharray="3 1.500"/><path d="M6.500 6 V9" stroke="#e05050" stroke-width="1"/></svg>
<svg style="left:1106px;top:586.5px;" width="13" height="12" viewBox="0 0 13 12"><path d="M6.500 0.500 L9 6 H4Z" fill="#e8d840"/><path d="M0.500 9 H12.500" stroke="#e8d840" stroke-width="1.300" stroke-dasharray="3 1.500"/><path d="M6.500 6 V9" stroke="#e8d840" stroke-width="1"/></svg>
<svg style="left:1122px;top:586.5px;" width="13" height="12" viewBox="0 0 13 12"><path d="M6.500 0.500 L9 6 H4Z" fill="#60d868"/><path d="M0.500 9 H12.500" stroke="#60d868" stroke-width="1.300" stroke-dasharray="3 1.500"/><path d="M6.500 6 V9" stroke="#60d868" stroke-width="1"/></svg>
<div class="t" style="left:1151px;top:583.5px;height:12px;line-height:12px;font-size:6.5px;color:#e4e4e4;transform:scaleX(0.692);">1</div>
<svg style="left:1153px;top:591px;" width="6" height="6" viewBox="0 0 6 6"><path d="M0.500 0.500 L5 5 M5 2 V5 H2" stroke="#dcdcdc" stroke-width="0.900" fill="none"/></svg>
<div style="left:1161px;top:585px;width:16.5px;height:15px;background:#b5a6ec;border:1px solid #e8e0ff;border-radius:1px"></div>
<svg style="left:1161px;top:585px;" width="16.5" height="15" viewBox="0 0 16.5 15"><rect x="3" y="3" width="10" height="6.500" fill="none" stroke="#4a3c8c" stroke-width="1.200"/><path d="M9 7 L13.500 11.500 M13.500 9 V11.500 H11" stroke="#fff" stroke-width="1.100" fill="none"/></svg>
<svg style="left:1180px;top:586px;" width="13" height="13" viewBox="0 0 13 13"><path d="M5 1.500 V11.500 L0.500 6.500Z" fill="#a892ea"/><path d="M7 4 L12 9 M12 5.500 V9 H8.500" stroke="#e4e4e4" stroke-width="1.100" fill="none"/></svg>
<svg style="left:1197.5px;top:585.5px;" width="13" height="14" viewBox="0 0 13 14"><circle cx="8" cy="2" r="1.700" fill="#a892ea"/><path d="M3 5 L8 4.500 L10.500 7 M8 4.500 L6.500 9 L9.500 13 M6.500 9 L2.500 11" stroke="#a892ea" stroke-width="1.600" fill="none"/></svg>
<svg style="left:1214px;top:585.5px;" width="12" height="14" viewBox="0 0 12 14"><circle cx="6" cy="2" r="1.800" fill="#a892ea"/><path d="M2.500 5 H9.500 L9.500 9 H8 V13.500 H4 V9 H2.500Z" fill="#a892ea"/></svg>
<svg style="left:395px;top:611px;" width="13" height="15" viewBox="0 0 13 15"><ellipse cx="6.500" cy="6.500" rx="4.800" ry="5.800" fill="#e894d8"/><ellipse cx="6.500" cy="6.500" rx="2.600" ry="3.600" fill="#f4c8ec"/><path d="M1 13.500 H12" stroke="#e894d8" stroke-width="1.300"/></svg>
<svg style="left:413px;top:611.5px;" width="13" height="14" viewBox="0 0 13 14"><path d="M0.500 13 V0.800 H3.500 V5 H8 V7.500 H12 V13Z" fill="#e894d8"/></svg>
<svg style="left:433px;top:611px;" width="9" height="15" viewBox="0 0 9 15"><rect x="1.500" y="1" width="6" height="7.500" rx="3" fill="none" stroke="#e894d8" stroke-width="1.600"/><rect x="1.500" y="6.500" width="6" height="7.500" rx="3" fill="none" stroke="#e894d8" stroke-width="1.600"/></svg>
<svg style="left:448px;top:613.5px;" width="11" height="11" viewBox="0 0 11 11"><circle cx="5.500" cy="5.500" r="4.500" fill="none" stroke="#e894d8" stroke-width="1.500"/><path d="M5.500 1 V10 M1 5.500 H10" stroke="#e894d8" stroke-width="1.300"/></svg>
<svg style="left:465px;top:612px;" width="14" height="15" viewBox="0 0 14 15"><rect x="0.500" y="0.500" width="4" height="11.500" fill="#c8c8c8"/><rect x="5.500" y="1" width="6.500" height="8" fill="#e894d8"/><path d="M5.500 3.500 H12 M5.500 6 H12" stroke="#8a3c80" stroke-width="0.800"/><g transform="translate(7.500,7.500) scale(0.520)"><path d="M0 0 L0 13.5 L3.4 10.4 L5.8 15.2 L8 14.1 L5.7 9.5 L10 9.2Z" fill="#f4f4f4" stroke="#333" stroke-width="1"/></g></svg>
<div style="left:484px;top:615.5px;width:130px;height:6px;background:#3d3d3d;border-radius:3px"></div>
<div style="left:489.5px;top:616.5px;width:4px;height:4px;background:#e894d8;"></div>
<div style="left:604.5px;top:616.5px;width:4px;height:4px;background:#e894d8;"></div>
<div style="left:503.0px;top:618px;width:1.3px;height:1.3px;background:#e894d8;"></div>
<div style="left:516.9px;top:618px;width:1.3px;height:1.3px;background:#e894d8;"></div>
<div style="left:530.9px;top:618px;width:1.3px;height:1.3px;background:#e894d8;"></div>
<div style="left:562.4px;top:618px;width:1.3px;height:1.3px;background:#e894d8;"></div>
<div style="left:576.4px;top:618px;width:1.3px;height:1.3px;background:#e894d8;"></div>
<div style="left:590.4px;top:618px;width:1.3px;height:1.3px;background:#e894d8;"></div>
<div style="left:540px;top:611px;width:14px;height:15.5px;background:#3f3f3f;border-radius:3px;border:0.5px solid #4c4c4c"></div>
<svg style="left:542.5px;top:614px;" width="9" height="9" viewBox="0 0 9 9"><circle cx="4.500" cy="4" r="3" fill="#e894d8"/><circle cx="4.500" cy="4" r="1.300" fill="#f8d8f0"/><path d="M1 8.300 H8" stroke="#e894d8" stroke-width="1"/></svg>
<svg style="left:628px;top:612px;" width="13" height="13" viewBox="0 0 13 13"><path d="M6.500 0.500 V12.500 M1.500 4.500 H11.500" stroke="#3cb0d0" stroke-width="1.500"/><ellipse cx="6.500" cy="4.500" rx="4" ry="1.800" fill="none" stroke="#3cb0d0" stroke-width="1.100"/><path d="M3 11.500 H10" stroke="#d8d8d8" stroke-width="1.200"/></svg>
<svg style="left:644px;top:612px;" width="13" height="13" viewBox="0 0 13 13"><path d="M6.500 1 V7 L1 11 M6.500 7 L12 10" stroke="#3cb0d0" stroke-width="1.600" fill="none"/><circle cx="6.500" cy="7" r="1.500" fill="#e4e4e4"/></svg>
<svg style="left:662.5px;top:612px;" width="13" height="13" viewBox="0 0 13 13"><path d="M1.500 1.500 L4 1 L11.500 9 L12 12 L9 11.500 L1.500 4Z" fill="#3cb0d0"/><path d="M3 2.500 L10.500 10.500" stroke="#1c5c70" stroke-width="0.800"/></svg>
<svg style="left:680px;top:612px;" width="14" height="13" viewBox="0 0 14 13"><path d="M7 1 L13 6.500 L7 12 L1 6.500Z" fill="#3cb0d0"/><path d="M7 3 L11 6.500 L7 10 L3 6.500Z" fill="#8cdcf0"/></svg>
<div style="left:703.5px;top:610px;width:16.5px;height:17.5px;background:#f29c9c;border-radius:1px"></div>
<svg style="left:703.5px;top:610px;" width="16.5" height="17.5" viewBox="0 0 16.5 17.5"><path d="M3 15 Q4 3 6 3 Q8 3 8.500 9 Q9 3 11 3 Q13 3 13.500 15" stroke="#8c1c24" stroke-width="1.500" fill="none"/></svg>
<svg style="left:724px;top:612px;" width="12" height="14" viewBox="0 0 12 14"><path d="M0.500 13 V2 L3 0.500 L6 3 L9 0.500 L11.500 2 V13 L6 10Z" fill="#c44c4c"/></svg>
<svg style="left:742.5px;top:612px;" width="13" height="14" viewBox="0 0 13 14"><path d="M1.500 0.500 V10 L10.500 5.500Z" fill="#cc4848"/><path d="M1 12.500 H12" stroke="#e0b0b0" stroke-width="1.300" stroke-dasharray="2 1.300"/></svg>
<div style="left:768.5px;top:618px;width:2.6px;height:2.6px;background:#3c9ce4;border-radius:1.300px"></div>
<div style="left:772.5px;top:618px;width:2.6px;height:2.6px;background:#3c9ce4;border-radius:1.300px"></div>
<div style="left:776.5px;top:618px;width:2.6px;height:2.6px;background:#3c9ce4;border-radius:1.300px"></div>
<div style="left:791.5px;top:610.5px;width:15px;height:16.5px;background:#636363;border-radius:1px"></div>
<div class="t" style="left:795.500px;top:610px;height:17px;line-height:17px;font-size:13px;color:#f4f4f4;font-family:'DejaVu Sans','Liberation Sans',sans-serif">&#949;</div>
<svg style="left:810px;top:613px;" width="13" height="12" viewBox="0 0 13 12"><path d="M0.500 3 H3 M0.500 9 H3 M9.500 3 H12 M9.500 9 H12" stroke="#e0e0e0" stroke-width="1.200"/><path d="M0 6 H13" stroke="#e0e0e0" stroke-width="1" stroke-dasharray="1.200 1.200"/><circle cx="6.500" cy="6" r="1.600" fill="#e0e0e0"/></svg>
<svg style="left:825px;top:612.5px;" width="12" height="13" viewBox="0 0 12 13"><rect x="0.600" y="0.600" width="10.800" height="11.800" rx="1" fill="none" stroke="#e4e4e4" stroke-width="1.200"/><path d="M0.600 4.500 H11.400 M0.600 8.500 H11.400 M4 0.600 V12.400" stroke="#e4e4e4" stroke-width="1"/></svg>
<svg style="left:841.5px;top:611.5px;" width="15" height="15" viewBox="0 0 15 15"><circle cx="4" cy="3" r="1.800" fill="none" stroke="#e4e4e4" stroke-width="1.100"/><path d="M6 3 H13 M9 3 V7 M6 7 H12 L12 9 M8 7 V14 M10 7 V14" stroke="#e4e4e4" stroke-width="1.200" fill="none"/></svg>
<svg style="left:861px;top:613px;" width="13" height="12" viewBox="0 0 13 12"><path d="M6.500 11.500 L1 6 A3 3 0 0 1 6.500 2.500 A3 3 0 0 1 12 6Z" fill="#e4e4e4"/><path d="M6.500 8.500 L8 6 H5Z" fill="#666"/></svg>
<svg style="left:879px;top:612.5px;" width="13" height="13" viewBox="0 0 13 13"><path d="M6.500 0.800 L12 3.800 V9.500 L6.500 12.500 L1 9.500 V3.800Z" fill="#d8d8d8"/><path d="M1 3.800 L6.500 6.800 L12 3.800 M6.500 6.800 V12.500" stroke="#a8a8a8" stroke-width="0.700" fill="none"/></svg>
<svg style="left:897.5px;top:612.5px;" width="13" height="13" viewBox="0 0 13 13"><circle cx="5" cy="5" r="3.700" fill="none" stroke="#e8e8e8" stroke-width="1.500"/><path d="M7.800 7.800 L12 12" stroke="#e8e8e8" stroke-width="1.900"/></svg>
<div style="left:0px;top:633px;width:1280px;height:1.2px;background:#3a3a3a;"></div>
<div style="left:2px;top:637px;width:1px;height:18px;background:repeating-linear-gradient(#5e5e5e 0 1px,transparent 1px 2px)"></div>
<div style="left:4px;top:637px;width:1px;height:18px;background:repeating-linear-gradient(#5e5e5e 0 1px,transparent 1px 2px)"></div>
<div style="left:8px;top:636.5px;width:59px;height:17px;background:#2b2b2b;border-radius:1px"></div>
<div class="t" style="left:12px;top:639.3px;height:12px;line-height:12px;font-size:8.4px;color:#dedede;transform:scaleX(0.749);">1</div>
<div style="left:72.5px;top:636.5px;width:58.5px;height:17px;background:#2b2b2b;border-radius:1px"></div>
<div class="t" style="left:76px;top:639.3px;height:12px;line-height:12px;font-size:8.4px;color:#dedede;transform:scaleX(0.856);">15</div>
<div style="left:136px;top:636.5px;width:628.5px;height:17px;background:#383838;border-radius:1px"></div>
<div style="left:361px;top:637.5px;width:240px;height:15.5px;background:#5c5c5c;border-radius:2px"></div>
<div style="left:363px;top:640.5px;width:8px;height:9px;background:#9a9a9a;border-radius:1px"></div>
<div style="left:590.5px;top:640.5px;width:8px;height:9px;background:#9a9a9a;border-radius:1px"></div>
<div class="t" style="left:375px;top:639.3px;height:12px;line-height:12px;font-size:8.4px;color:#dedede;transform:scaleX(0.856);">15</div>
<div class="t" style="left:579px;top:639.3px;height:12px;line-height:12px;font-size:8.4px;color:#dedede;transform:scaleX(0.856);">29</div>
<div style="left:767.5px;top:636.5px;width:60px;height:17px;background:#2b2b2b;border-radius:1px"></div>
<div class="t" style="left:771px;top:639.3px;height:12px;line-height:12px;font-size:8.4px;color:#dedede;transform:scaleX(0.856);">29</div>
<div style="left:832.5px;top:636.5px;width:59px;height:17px;background:#2b2b2b;border-radius:1px"></div>
<div class="t" style="left:836px;top:639.3px;height:12px;line-height:12px;font-size:8.4px;color:#dedede;transform:scaleX(0.856);">39</div>
<div style="left:894.3px;top:639px;width:1.5px;height:12px;background:#8a8a8a;border-radius:1px"></div>
<div style="left:922.8px;top:639px;width:1.5px;height:12px;background:#8a8a8a;border-radius:1px"></div>
<div style="left:1105.3px;top:639px;width:1.5px;height:12px;background:#8a8a8a;border-radius:1px"></div>
<div style="left:1213.3px;top:639px;width:1.5px;height:12px;background:#8a8a8a;border-radius:1px"></div>
<svg style="left:905px;top:638px;" width="13" height="14" viewBox="0 0 13 14"><path d="M1 1 H8.500 V13 L4.750 9.500 L1 13Z" fill="#f0843a"/><path d="M10.500 0.500 V5.500 M8 3 H13" stroke="#e8e8e8" stroke-width="1.200"/></svg>
<svg style="left:934.5px;top:643px;" width="7" height="5" viewBox="0 0 7 5"><path d="M0.300 0.500 L6.300 0.500 L3.300 4Z" fill="#6a6a6a"/></svg>
<div style="left:945px;top:637.5px;width:67.5px;height:15.5px;background:#414141;border-radius:1px"></div>
<div class="t" style="left:948px;top:639.3px;height:12px;line-height:12px;font-size:8.4px;color:#dedede;transform:scaleX(0.878);">No Character Set</div>
<div style="left:1017.5px;top:639px;width:12.5px;height:12.5px;background:#2faa44;border-radius:2px"></div>
<svg style="left:1017.5px;top:639px;" width="12.5" height="12.5" viewBox="0 0 12.5 12.5"><path d="M3 4 Q6.250 6.500 9.500 4 M3 7 Q6.250 9.500 9.500 7" stroke="#b8f0c0" stroke-width="1" fill="none"/></svg>
<div style="left:1030.5px;top:637.5px;width:67px;height:15.5px;background:#414141;border-radius:1px"></div>
<div class="t" style="left:1034px;top:639.3px;height:12px;line-height:12px;font-size:8.4px;color:#dedede;transform:scaleX(0.878);">Attack</div>
<div style="left:1112.5px;top:638px;width:55px;height:14.5px;background:#5d5d5d;border-radius:1px"></div>
<div class="t" style="left:1116px;top:639.3px;height:12px;line-height:12px;font-size:8.4px;color:#dedede;transform:scaleX(0.874);">30 fps</div>
<svg style="left:1156.5px;top:642.5px;" width="8" height="6" viewBox="0 0 8 6"><path d="M0.500 0.800 L7 0.800 L3.750 4.800Z" fill="#e0e0e0"/></svg>
<svg style="left:1174px;top:640px;" width="13" height="11" viewBox="0 0 13 11"><path d="M3.500 2.500 H9 a3 3 0 0 1 0 6 H4 a3 3 0 0 1 -0.500 -6" stroke="#e4e4e4" stroke-width="1.300" fill="none"/><path d="M7 0.500 L9.500 2.500 L7 4.500" stroke="#e4e4e4" stroke-width="1.100" fill="none"/></svg>
<svg style="left:1192px;top:639px;" width="13" height="13" viewBox="0 0 13 13"><rect x="0.500" y="4" width="11" height="8" rx="1" fill="#f0843a"/><path d="M2.500 6.500 H9.500 M2.500 9 H9.500" stroke="#fff" stroke-width="1"/><path d="M7 0.500 L11.500 2.500 L7 4.500Z" fill="#e8e8e8"/></svg>
<svg style="left:1218px;top:640px;" width="12" height="11" viewBox="0 0 12 11"><path d="M0.500 3.500 H3 L6.500 0.500 V10.500 L3 7.500 H0.500Z" fill="#e4e4e4"/><path d="M8 3.500 Q9.500 5.500 8 7.500 M9.500 2 Q12 5.500 9.500 9" stroke="#e4e4e4" stroke-width="0.900" fill="none"/></svg>
<div style="left:1240.5px;top:638px;width:15.5px;height:15px;background:#d84a3a;border-radius:2px"></div>
<svg style="left:1240.5px;top:638px;" width="15.5" height="15" viewBox="0 0 15.5 15"><circle cx="7.750" cy="7.500" r="4.800" fill="none" stroke="#ffd8d0" stroke-width="1.100"/><path d="M7.750 4.500 V7.500 L10 9" stroke="#ffd8d0" stroke-width="1" fill="none"/></svg>
<svg style="left:1261px;top:638.5px;" width="14" height="14" viewBox="0 0 14 14"><circle cx="3" cy="2.500" r="1.800" fill="#e8e8e8"/><circle cx="8.500" cy="3" r="1.600" fill="#f0843a"/><path d="M4.500 6 L9 5.500 L11.500 8 M9 5.500 L7.500 9.500 L10.500 13 M7.500 9.500 L4 11.500" stroke="#f0843a" stroke-width="1.500" fill="none"/></svg>
<div style="left:0px;top:656.5px;width:1280px;height:1.2px;background:#3a3a3a;"></div>
<div style="left:2px;top:661px;width:1px;height:14px;background:repeating-linear-gradient(#5e5e5e 0 1px,transparent 1px 2px)"></div>
<div style="left:4px;top:661px;width:1px;height:14px;background:repeating-linear-gradient(#5e5e5e 0 1px,transparent 1px 2px)"></div>
<div class="t" style="left:11px;top:661.8px;height:12px;line-height:12px;font-size:8.8px;color:#e4e4e4;transform:scaleX(0.858);">Python</div>
<div style="left:39px;top:660px;width:607.5px;height:15.5px;background:#2b2b2b;border-radius:1px"></div>
<div style="left:651px;top:660px;width:606.5px;height:15.5px;background:#2b2b2b;border-radius:1px"></div>
<div class="t" style="left:654.5px;top:661.8px;height:12px;line-height:12px;font-size:8.4px;color:#dedede;transform:scaleX(0.847);">// Result: 2</div>
<svg style="left:1261.5px;top:662px;" width="12" height="11" viewBox="0 0 12 11"><rect x="0.600" y="0.600" width="10.800" height="9.800" rx="1" fill="none" stroke="#d8d8d8" stroke-width="1.100"/><path d="M0.600 3 H11.400" stroke="#d8d8d8" stroke-width="1"/><text x="3" y="9" font-size="5.500" fill="#d8d8d8" font-family="Liberation Sans,sans-serif">{}</text></svg>
<div style="left:0px;top:678px;width:1280px;height:1.2px;background:#3a3a3a;"></div>
<div style="left:0px;top:679.2px;width:1280px;height:40.8px;background:#464646;"></div>
<div style="left:2px;top:681px;width:1px;height:11px;background:repeating-linear-gradient(#5e5e5e 0 1px,transparent 1px 2px)"></div>
<div style="left:4px;top:681px;width:1px;height:11px;background:repeating-linear-gradient(#5e5e5e 0 1px,transparent 1px 2px)"></div>
<div class="t" style="left:12px;top:680.3px;height:12px;line-height:12px;font-size:7.6px;color:#b4b4b4;transform:scaleX(0.819);">TranslateXYZ(cm):</div>
<div class="t" style="left:75px;top:680.3px;height:12px;line-height:12px;font-size:7.6px;color:#c4c4c4;transform:scaleX(0.837);">102.543</div>
<div class="t" style="left:115.5px;top:680.3px;height:12px;line-height:12px;font-size:7.6px;color:#c4c4c4;transform:scaleX(0.855);">117.819</div>
<div class="t" style="left:157px;top:680.3px;height:12px;line-height:12px;font-size:7.6px;color:#c4c4c4;transform:scaleX(0.860);">72.329</div>
<div style="left:0;top:0;width:1280px;height:720px;opacity:0.2"><svg style="left:1050px;top:648px" width="80" height="64" viewBox="0 0 80 64"><path fill="#fff" fill-rule="evenodd" d="M57.3 43.8 L58.4 44.2 L59.4 44.7 L60.4 45.2 L60.9 45.7 L60.7 46.1 L60.4 46.4 L60.2 46.8 L59.9 47.2 L59.6 47.5 L59.3 47.8 L59.0 48.2 L58.6 48.5 L57.2 48.5 L55.8 48.5 L54.4 48.4 L53.4 48.5 L53.1 48.7 L52.7 49.0 L52.3 49.2 L51.9 49.5 L51.5 49.7 L51.1 49.9 L50.6 50.2 L50.2 50.4 L50.5 51.1 L50.8 51.8 L51.1 52.6 L51.0 53.1 L50.4 53.3 L49.8 53.6 L49.1 53.8 L48.5 54.0 L47.9 54.2 L47.3 54.3 L46.6 54.5 L45.9 54.7 L44.8 54.2 L43.7 53.8 L42.7 53.3 L41.8 53.0 L41.2 53.1 L40.7 53.2 L40.1 53.3 L39.5 53.4 L38.9 53.4 L38.3 53.5 L37.7 53.5 L37.1 53.6 L36.6 54.3 L36.0 54.9 L35.4 55.6 L34.7 56.0 L33.9 56.0 L33.2 56.0 L32.5 56.0 L31.8 55.9 L31.0 55.9 L30.3 55.8 L29.6 55.8 L28.9 55.7 L28.4 55.0 L28.1 54.3 L27.8 53.5 L27.4 53.1 L26.8 53.0 L26.2 52.9 L25.7 52.8 L25.1 52.6 L24.5 52.5 L24.0 52.4 L23.5 52.2 L22.9 52.1 L21.8 52.4 L20.5 52.8 L19.3 53.2 L18.3 53.3 L17.7 53.0 L17.1 52.8 L16.5 52.6 L16.0 52.3 L15.5 52.1 L14.9 51.8 L14.4 51.5 L13.9 51.2 L14.4 50.5 L14.9 49.8 L15.4 49.2 L15.6 48.7 L15.3 48.4 L14.9 48.1 L14.6 47.9 L14.3 47.6 L14.0 47.3 L13.7 47.0 L13.4 46.7 L13.2 46.4 L11.8 46.4 L10.4 46.3 L9.0 46.2 L8.0 46.0 L7.8 45.6 L7.6 45.2 L7.4 44.9 L7.3 44.5 L7.1 44.1 L7.0 43.7 L6.9 43.4 L6.8 43.0 L7.9 42.5 L9.1 42.1 L10.3 41.8 L11.0 41.4 L11.1 41.1 L11.1 40.8 L11.1 40.4 L11.2 40.1 L11.2 39.8 L11.3 39.5 L11.4 39.2 L11.5 38.8 L10.4 38.4 L9.4 37.9 L8.4 37.4 L7.9 36.9 L8.1 36.5 L8.4 36.2 L8.6 35.8 L8.9 35.4 L9.2 35.1 L9.5 34.8 L9.8 34.4 L10.2 34.1 L11.6 34.1 L13.0 34.1 L14.4 34.2 L15.4 34.1 L15.7 33.9 L16.1 33.6 L16.5 33.4 L16.9 33.1 L17.3 32.9 L17.7 32.7 L18.2 32.4 L18.6 32.2 L18.3 31.5 L18.0 30.8 L17.7 30.0 L17.8 29.5 L18.4 29.3 L19.0 29.0 L19.7 28.8 L20.3 28.6 L20.9 28.4 L21.5 28.3 L22.2 28.1 L22.9 27.9 L24.0 28.4 L25.1 28.8 L26.1 29.3 L27.0 29.6 L27.6 29.5 L28.1 29.4 L28.7 29.3 L29.3 29.2 L29.9 29.2 L30.5 29.1 L31.1 29.1 L31.7 29.0 L32.2 28.3 L32.8 27.7 L33.4 27.0 L34.1 26.6 L34.9 26.6 L35.6 26.6 L36.3 26.6 L37.0 26.7 L37.8 26.7 L38.5 26.8 L39.2 26.8 L39.9 26.9 L40.4 27.6 L40.7 28.3 L41.0 29.1 L41.4 29.5 L42.0 29.6 L42.6 29.7 L43.1 29.8 L43.7 30.0 L44.3 30.1 L44.8 30.2 L45.3 30.4 L45.9 30.5 L47.0 30.2 L48.3 29.8 L49.5 29.4 L50.5 29.3 L51.1 29.6 L51.7 29.8 L52.3 30.0 L52.8 30.3 L53.3 30.5 L53.9 30.8 L54.4 31.1 L54.9 31.4 L54.4 32.1 L53.9 32.8 L53.4 33.4 L53.2 33.9 L53.5 34.2 L53.9 34.5 L54.2 34.7 L54.5 35.0 L54.8 35.3 L55.1 35.6 L55.4 35.9 L55.6 36.2 L57.0 36.2 L58.4 36.3 L59.8 36.4 L60.8 36.6 L61.0 37.0 L61.2 37.4 L61.4 37.7 L61.5 38.1 L61.7 38.5 L61.8 38.9 L61.9 39.2 L62.0 39.6 L60.9 40.1 L59.7 40.5 L58.5 40.8 L57.8 41.2 L57.7 41.5 L57.7 41.8 L57.7 42.2 L57.6 42.5 L57.6 42.8 L57.5 43.1 L57.4 43.4Z M16.9 39.3 a17.1 6.9 0 1 0 34.2 0 a17.1 6.9 0 1 0 -34.2 0Z"/><path fill="#fff" d="M49.6 6.4 L43.6 12.4 L39.1 18.2 L35.1 26.7 L30.2 39.7 L36.4 37.8 L42.7 35.4 L49.8 32.7 L51.1 29.3 L46.2 28.6 L41.6 26.7 L44.9 17.8Z"/></svg><div class="t" style="left:1130px;top:651px;height:32px;line-height:32px;font-size:30.5px;color:#fff;-webkit-text-stroke:0.7px #fff;transform:scaleX(0.953)">GNOMON</div><div class="t" style="left:1117px;top:679px;height:30px;line-height:30px;font-size:27.5px;color:#fff;-webkit-text-stroke:0.7px #fff;transform:scaleX(0.899)">WORKSHOP</div><div class="t" style="left:1115.3px;top:678.700px;height:12px;line-height:12px;font-size:14px;color:#fff;-webkit-text-stroke:0.4px #fff;transform-origin:0 0;transform:rotate(-90deg) scaleX(0.839)">THE</div></div>
<div style="left:1194px;top:50px;width:86px;height:225px;background:#4b4b4b;"></div>
<div style="left:996px;top:50.3px;width:198.4px;height:225.3px;background:#3b3b3b;border-radius:2px"></div>
<div class="t" style="left:998.8px;top:53px;width:51.5px;height:27px;background:#6f6f6f;border-radius:3px;text-align:center;line-height:29px;font-size:8.1px;color:#f2f2f2;transform:none;border:1px dashed #e8e8e8;border-radius:2px;line-height:26px"><span style="display:inline-block;transform:scaleX(0.9)">Allkey</span></div>
<div class="t" style="left:1051.3px;top:53px;width:43.90000000000009px;height:27px;background:#f2a3a6;border-radius:3px;text-align:center;line-height:29px;font-size:8.1px;color:#a06468;transform:none;"><span style="display:inline-block;transform:scaleX(0.9)">Neck</span></div>
<div class="t" style="left:1096.3px;top:53px;width:44.5px;height:27px;background:#c9585c;border-radius:3px;text-align:center;line-height:29px;font-size:8.1px;color:#7c2c30;transform:none;"><span style="display:inline-block;transform:scaleX(0.9)">Head</span></div>
<div class="t" style="left:1142.3px;top:53px;width:48.100000000000136px;height:27px;background:#8f3c3f;border-radius:3px;text-align:center;line-height:29px;font-size:8.1px;color:#e87478;transform:none;"><span style="display:inline-block;transform:scaleX(0.9)">Chest</span></div>
<div class="t" style="left:998.8px;top:81px;width:95.20000000000005px;height:25.799999999999997px;background:#f2ad8c;border-radius:3px;text-align:center;line-height:27.799999999999997px;font-size:8.1px;color:#a8735a;transform:none;"><span style="display:inline-block;transform:scaleX(0.9)">Shoudlers</span></div>
<div class="t" style="left:1095.8px;top:81px;width:94.60000000000014px;height:25.799999999999997px;background:#e57b40;border-radius:3px;text-align:center;line-height:27.799999999999997px;font-size:8.1px;color:#9a4c24;transform:none;"><span style="display:inline-block;transform:scaleX(0.9)">Lshoulder</span></div>
<div class="t" style="left:998.8px;top:108px;width:84.20000000000005px;height:25.80000000000001px;background:#e27a40;border-radius:3px;text-align:center;line-height:27.80000000000001px;font-size:8.1px;color:#8e441e;transform:none;"><span style="display:inline-block;transform:scaleX(0.9)">Rshoulder</span></div>
<div class="t" style="left:1084.3px;top:108px;width:50.90000000000009px;height:25.80000000000001px;background:#f2e773;border-radius:3px;text-align:center;line-height:27.80000000000001px;font-size:8.1px;color:#a09640;transform:none;"><span style="display:inline-block;transform:scaleX(0.9)">COG</span></div>
<div class="t" style="left:1136.2px;top:108px;width:54.200000000000045px;height:25.80000000000001px;background:#c8b832;border-radius:3px;text-align:center;line-height:27.80000000000001px;font-size:8.1px;color:#6c6214;transform:none;"><span style="display:inline-block;transform:scaleX(0.9)">Pelvis</span></div>
<div class="t" style="left:999px;top:135.4px;width:44.799999999999955px;height:26.0px;background:#88eea0;border-radius:3px;text-align:center;line-height:28.0px;font-size:8.1px;color:#4a9a5e;transform:none;"><span style="display:inline-block;transform:scaleX(0.9)">Rhand</span></div>
<div class="t" style="left:1044.8px;top:135.4px;width:49.0px;height:26.0px;background:#4cae68;border-radius:3px;text-align:center;line-height:28.0px;font-size:8.1px;color:#1c5a30;transform:none;"><span style="display:inline-block;transform:scaleX(0.9)">RLbow</span></div>
<div class="t" style="left:1094.8px;top:135.4px;width:95.60000000000014px;height:26.0px;background:#a8f0f2;border-radius:3px;text-align:center;line-height:28.0px;font-size:8.1px;color:#5a9a9c;transform:none;"><span style="display:inline-block;transform:scaleX(0.9)">LHandControl</span></div>
<div class="t" style="left:999.3px;top:162.6px;width:51.90000000000009px;height:26.200000000000017px;background:#3ba7bc;border-radius:3px;text-align:center;line-height:28.200000000000017px;font-size:8.1px;color:#1a5c6c;transform:none;"><span style="display:inline-block;transform:scaleX(0.9)">LLbow</span></div>
<div class="t" style="left:1052px;top:162.6px;width:43.90000000000009px;height:26.200000000000017px;background:#e0d3f3;border-radius:3px;text-align:center;line-height:28.200000000000017px;font-size:8.1px;color:#8a7ca4;transform:none;border:1px solid #fff;border-radius:0;line-height:26px"><span style="display:inline-block;transform:scaleX(0.9)">Lfoot</span></div>
<div class="t" style="left:1096.6px;top:162.6px;width:47.30000000000018px;height:26.200000000000017px;background:#b5a1e0;border-radius:3px;text-align:center;line-height:28.200000000000017px;font-size:8.1px;color:#6a5a98;transform:none;"><span style="display:inline-block;transform:scaleX(0.9)">Lknee</span></div>
<div class="t" style="left:1144.8px;top:162.6px;width:45.600000000000136px;height:26.200000000000017px;background:#dc8fd1;border-radius:3px;text-align:center;line-height:28.200000000000017px;font-size:8.1px;color:#94508a;transform:none;"><span style="display:inline-block;transform:scaleX(0.9)">Rfoot</span></div>
<div class="t" style="left:999.3px;top:190px;width:191.10000000000014px;height:26px;background:#dc8fd1;border-radius:3px;text-align:center;line-height:28px;font-size:8.1px;color:#94508a;transform:none;"><span style="display:inline-block;transform:scaleX(0.9)">Rknee</span></div>
<svg style="left:1201px;top:57.5px;" width="12" height="12" viewBox="0 0 12 12"><rect x="0.5" y="4.500" width="11" height="6.500" rx="1" fill="#b8a4ec"/><path d="M9 0.5 V4 M7.2 2.200 H10.800" stroke="#d8ccf8" stroke-width="1.1"/></svg>
<svg style="left:1217.5px;top:57.5px;" width="12" height="12" viewBox="0 0 12 12"><rect x="0.5" y="6.500" width="11" height="4.500" rx="1" fill="#b8a4ec"/><rect x="3.500" y="1" width="5" height="5" rx="1" fill="#d8d0f0"/></svg>
<svg style="left:1234px;top:57.5px;" width="12" height="12" viewBox="0 0 12 12"><rect x="0.5" y="4.500" width="11" height="6.500" rx="1" fill="#b8a4ec"/><circle cx="9" cy="3" r="2.200" fill="#f0f0f0"/></svg>
<svg style="left:1250px;top:57.5px;" width="12" height="12" viewBox="0 0 12 12"><rect x="0.5" y="4.500" width="11" height="6.500" rx="1" fill="#b8a4ec"/><rect x="4.500" y="0.5" width="6" height="3.500" rx="1.500" fill="#e8e4f4"/></svg>
<svg style="left:1264.5px;top:63.5px;" width="9" height="9" viewBox="0 0 9 9"><path d="M0.800 0.800 L8.200 8.200 M8.200 0.800 L0.800 8.200" stroke="#f0f0f0" stroke-width="1.300"/></svg>
</div></body></html>
